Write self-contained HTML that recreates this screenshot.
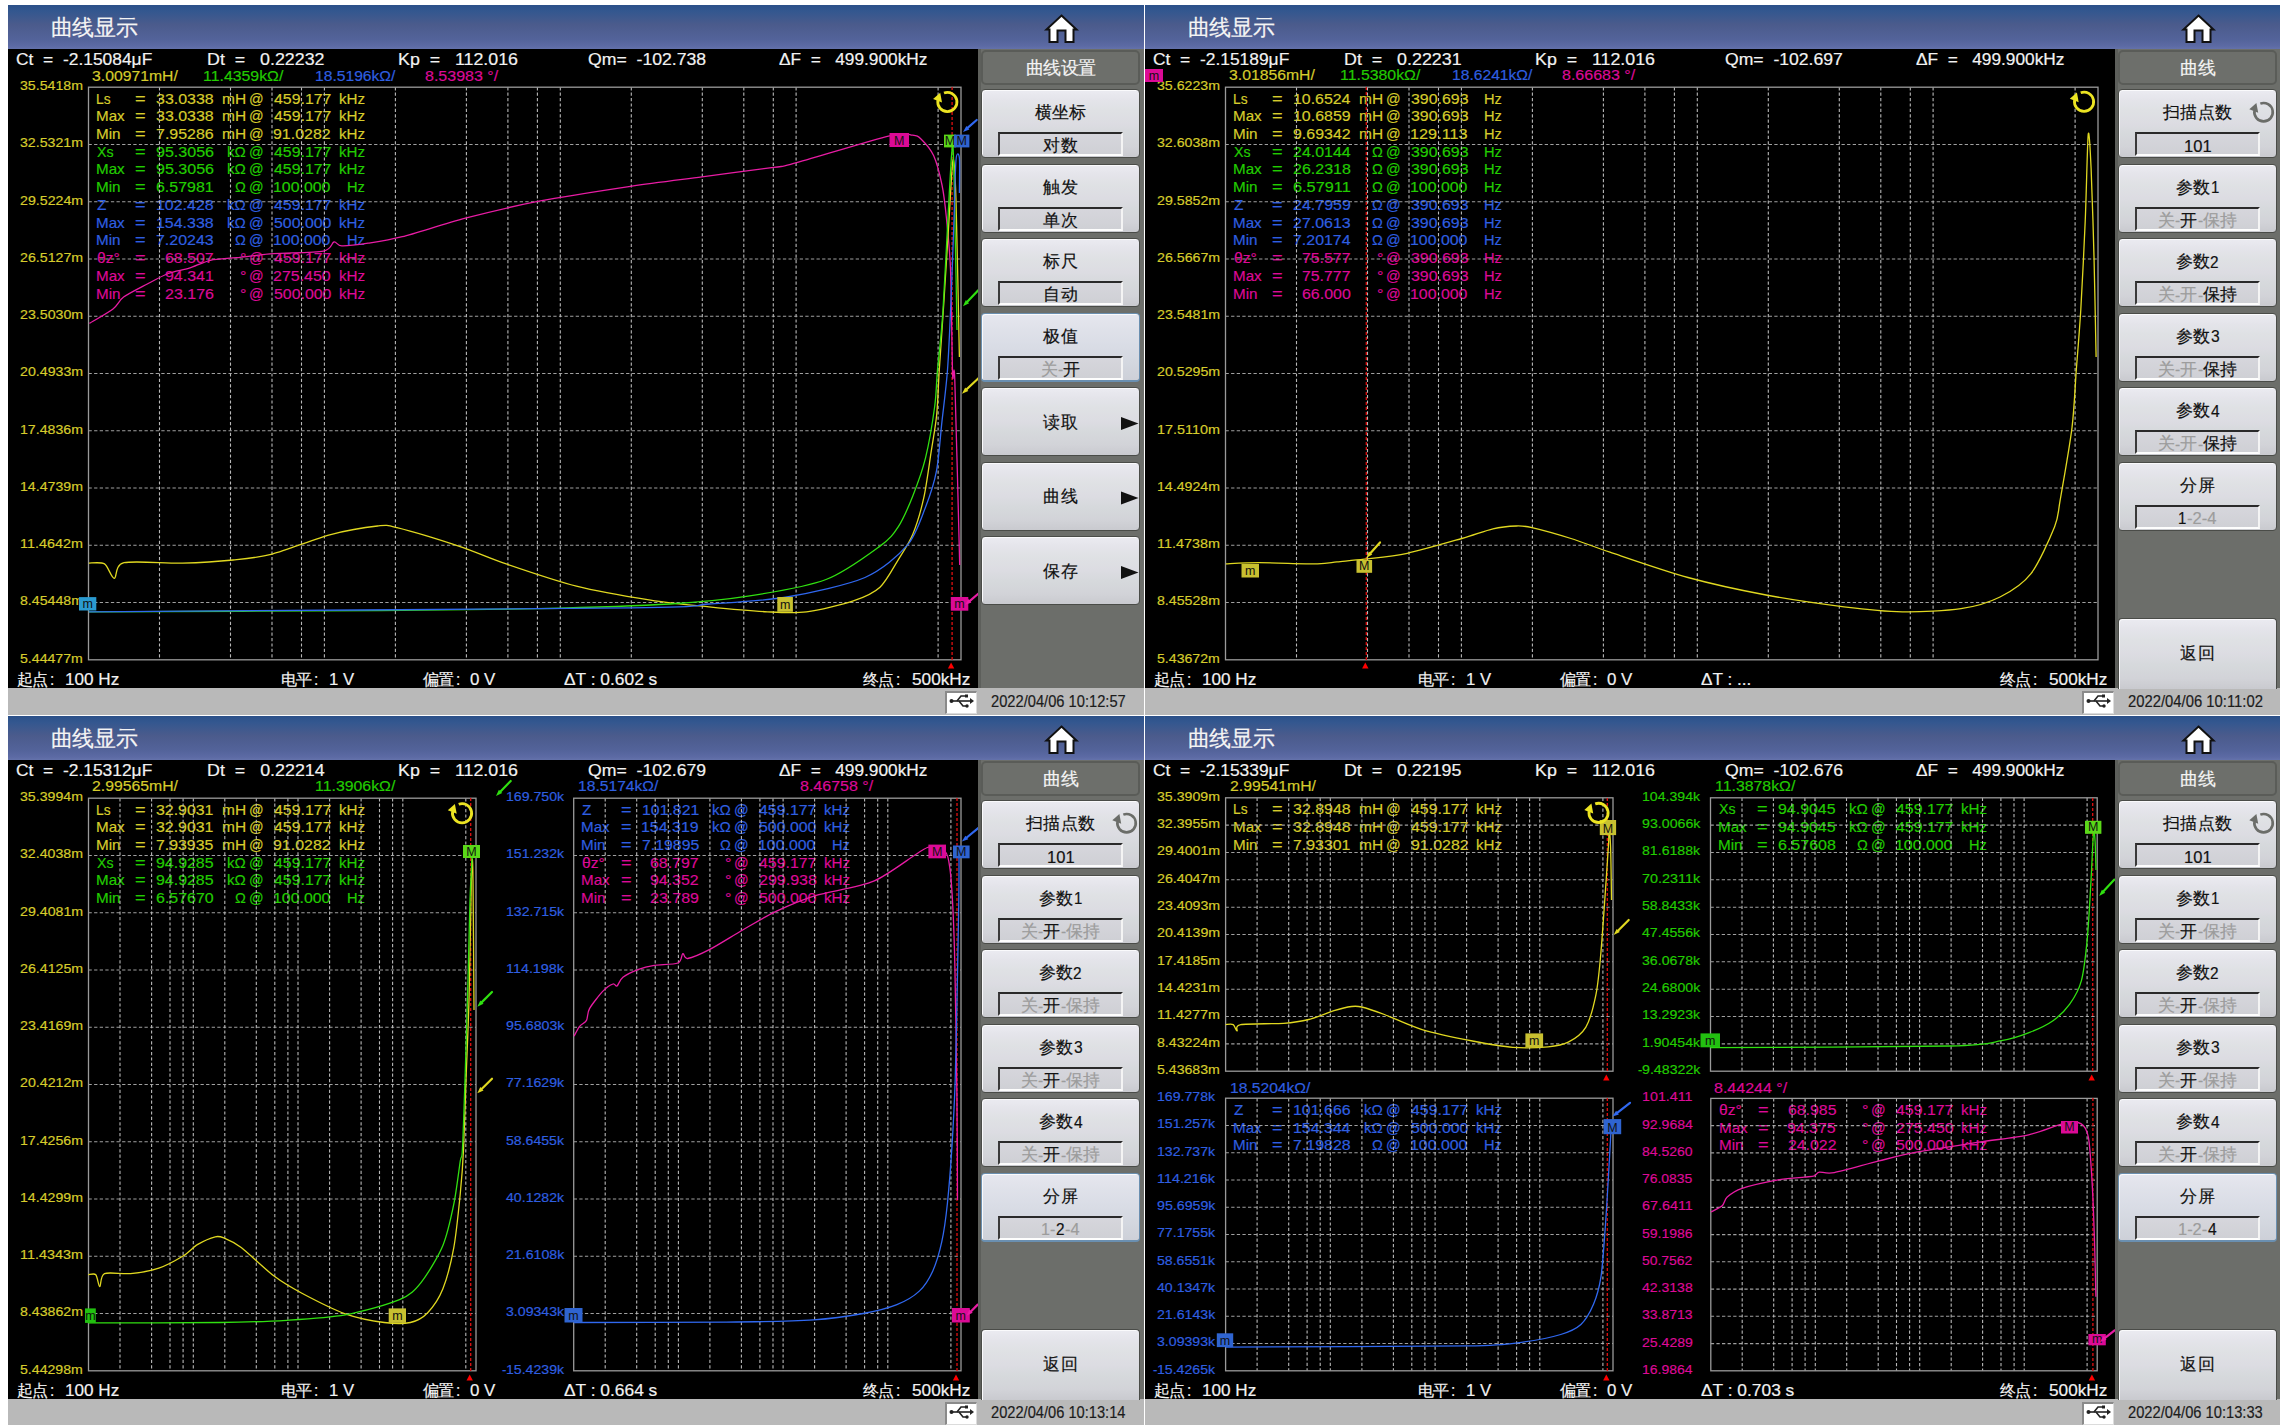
<!DOCTYPE html><html><head><meta charset="utf-8"><style>
*{margin:0;padding:0;box-sizing:border-box}
html,body{width:2282px;height:1425px;overflow:hidden;background:#fff;font-family:"Liberation Sans",sans-serif}
.p{position:absolute;overflow:hidden;background:#000}
.hd{position:absolute;left:0;top:0;width:100%;height:44px;background:linear-gradient(#2b5089 0%,#33578f 14%,#4b5b8c 45%,#53639a 78%,#5c6aa4 93%,#6472ab 100%)}
.sb{position:absolute;left:970px;top:44px;width:166px;height:639px;background:#6c6e6a;border-left:3px solid #5d5f5b}
.st{position:absolute;left:0;top:683px;width:100%;height:27px;background:#b9b9b9}
.t{position:absolute;white-space:pre;line-height:1;transform-origin:0 0;-webkit-text-stroke:0.18px currentColor}
.c{display:inline-block;text-align:center}
.btn{position:absolute;left:973px;width:159px;height:69px;border:1px solid #4a4c48;border-radius:4px;
 background:linear-gradient(#ebebf1 0%,#e4e4ea 15%,#dfe1e4 30%,#dcdce2 50%,#d6d9dc 65%,#d2d3d8 85%,#c9cacf 100%);
 box-shadow:inset 1px 1px 0 #fafafc}
.btn.sel{border-color:#6a8fb0;border-width:1px 1px 2px 1px;background:linear-gradient(#e6e7ef 0%,#e0e2ea 20%,#dadde6 45%,#d4d8e0 70%,#cdd0d8 100%)}
.tb{position:absolute;left:973px;top:45px;width:159px;height:35px;border:2px solid #5a5c58;border-radius:5px;background:#6d6f6b}
.vb{position:absolute;left:16px;top:42px;width:125px;height:24px;background:linear-gradient(#d6d6dc,#cfd0d5);
 border-top:2px solid #2a2a2a;border-left:2px solid #3a3a3a;border-bottom:2px solid #fdfdfd;border-right:2px solid #f4f4f4}
svg{position:absolute;left:0;top:0;overflow:visible}
</style></head><body>
<div class="p" style="left:8px;top:5px;width:1136px;height:710px">
<div class="hd"></div>
<div class="t" style="left:42.5px;top:11.9px;font-size:22.0px;color:#f4f4f4"><span class="c" style="width:21.80px">曲</span><span class="c" style="width:21.80px">线</span><span class="c" style="width:21.80px">显</span><span class="c" style="width:21.80px">示</span></div>
<svg width="1136" height="50"><path d="M1053.5 10.5 L1068.5 24.5 L1065.5 24.5 L1065.5 37 L1057.5 37 L1057.5 25.5 L1049.5 25.5 L1049.5 37 L1041.5 37 L1041.5 24.5 L1038.5 24.5 Z" fill="#fff" stroke="#111" stroke-width="2" stroke-linejoin="miter"/></svg>
<div class="t" style="left:8.1px;top:45.8px;font-size:16.19px;color:#f2f2f2;transform:scaleX(1.075)">Ct  =  -2.15084μF</div>
<div class="t" style="left:199.0px;top:45.8px;font-size:16.19px;color:#f2f2f2;transform:scaleX(1.102)">Dt  =   0.22232</div>
<div class="t" style="left:389.5px;top:45.8px;font-size:16.19px;color:#f2f2f2;transform:scaleX(1.100)">Kp  =   112.016</div>
<div class="t" style="left:580.1px;top:45.8px;font-size:16.19px;color:#f2f2f2;transform:scaleX(1.090)">Qm=  -102.738</div>
<div class="t" style="left:771.2px;top:45.8px;font-size:16.19px;color:#f2f2f2;transform:scaleX(1.068)">ΔF  =   499.900kHz</div>
<div class="t" style="left:84.3px;top:63.6px;font-size:14.71px;color:#d6cc2c;transform:scaleX(1.071)">3.00971mH/</div>
<div class="t" style="left:195.3px;top:63.6px;font-size:14.71px;color:#22cc00;transform:scaleX(1.079)">11.4359kΩ/</div>
<div class="t" style="left:306.7px;top:63.6px;font-size:14.71px;color:#2f5fe0;transform:scaleX(1.064)">18.5196kΩ/</div>
<div class="t" style="left:417.4px;top:63.6px;font-size:14.71px;color:#dc0a96;transform:scaleX(1.089)">8.53983 °/</div>
<div class="t" style="left:12.4px;top:74.1px;font-size:13.12px;color:#d6cc2c;transform:scaleX(1.080)">35.5418m</div>
<div class="t" style="left:12.4px;top:131.4px;font-size:13.12px;color:#d6cc2c;transform:scaleX(1.080)">32.5321m</div>
<div class="t" style="left:12.3px;top:188.6px;font-size:13.12px;color:#d6cc2c;transform:scaleX(1.083)">29.5224m</div>
<div class="t" style="left:12.3px;top:245.9px;font-size:13.12px;color:#d6cc2c;transform:scaleX(1.083)">26.5127m</div>
<div class="t" style="left:12.3px;top:303.1px;font-size:13.12px;color:#d6cc2c;transform:scaleX(1.083)">23.5030m</div>
<div class="t" style="left:12.3px;top:360.4px;font-size:13.12px;color:#d6cc2c;transform:scaleX(1.083)">20.4933m</div>
<div class="t" style="left:12.0px;top:417.7px;font-size:13.12px;color:#d6cc2c;transform:scaleX(1.079)">17.4836m</div>
<div class="t" style="left:12.0px;top:474.9px;font-size:13.12px;color:#d6cc2c;transform:scaleX(1.079)">14.4739m</div>
<div class="t" style="left:12.0px;top:532.2px;font-size:13.12px;color:#d6cc2c;transform:scaleX(1.097)">11.4642m</div>
<div class="t" style="left:12.4px;top:589.4px;font-size:13.12px;color:#d6cc2c;transform:scaleX(1.080)">8.45448m</div>
<div class="t" style="left:12.4px;top:646.7px;font-size:13.12px;color:#d6cc2c;transform:scaleX(1.078)">5.44477m</div>
<div class="t" style="left:88.3px;top:86.5px;font-size:14.92px;color:#d6cc2c;transform:scaleX(0.925)">Ls</div>
<div class="t" style="left:127.3px;top:86.5px;font-size:14.92px;color:#d6cc2c;transform:scaleX(1.215)">=</div>
<div class="t" style="left:148.1px;top:86.5px;font-size:14.92px;color:#d6cc2c;transform:scaleX(1.071)">33.0338</div>
<div class="t" style="left:214.2px;top:86.5px;font-size:14.92px;color:#d6cc2c;transform:scaleX(1.040)">mH</div>
<div class="t" style="left:240.8px;top:86.5px;font-size:14.92px;color:#d6cc2c;transform:scaleX(0.967)">@</div>
<div class="t" style="left:265.9px;top:86.5px;font-size:14.92px;color:#d6cc2c;transform:scaleX(1.065)">459.177</div>
<div class="t" style="left:330.7px;top:86.5px;font-size:14.92px;color:#d6cc2c;transform:scaleX(1.016)">kHz</div>
<div class="t" style="left:88.2px;top:104.2px;font-size:14.92px;color:#d6cc2c;transform:scaleX(1.019)">Max</div>
<div class="t" style="left:127.3px;top:104.2px;font-size:14.92px;color:#d6cc2c;transform:scaleX(1.215)">=</div>
<div class="t" style="left:148.1px;top:104.2px;font-size:14.92px;color:#d6cc2c;transform:scaleX(1.071)">33.0338</div>
<div class="t" style="left:214.2px;top:104.2px;font-size:14.92px;color:#d6cc2c;transform:scaleX(1.040)">mH</div>
<div class="t" style="left:240.8px;top:104.2px;font-size:14.92px;color:#d6cc2c;transform:scaleX(0.967)">@</div>
<div class="t" style="left:265.9px;top:104.2px;font-size:14.92px;color:#d6cc2c;transform:scaleX(1.065)">459.177</div>
<div class="t" style="left:330.7px;top:104.2px;font-size:14.92px;color:#d6cc2c;transform:scaleX(1.016)">kHz</div>
<div class="t" style="left:88.2px;top:121.9px;font-size:14.92px;color:#d6cc2c;transform:scaleX(1.022)">Min</div>
<div class="t" style="left:127.3px;top:121.9px;font-size:14.92px;color:#d6cc2c;transform:scaleX(1.215)">=</div>
<div class="t" style="left:148.0px;top:121.9px;font-size:14.92px;color:#d6cc2c;transform:scaleX(1.071)">7.95286</div>
<div class="t" style="left:214.2px;top:121.9px;font-size:14.92px;color:#d6cc2c;transform:scaleX(1.040)">mH</div>
<div class="t" style="left:240.8px;top:121.9px;font-size:14.92px;color:#d6cc2c;transform:scaleX(0.967)">@</div>
<div class="t" style="left:265.4px;top:121.9px;font-size:14.92px;color:#d6cc2c;transform:scaleX(1.069)">91.0282</div>
<div class="t" style="left:330.7px;top:121.9px;font-size:14.92px;color:#d6cc2c;transform:scaleX(1.016)">kHz</div>
<div class="t" style="left:89.1px;top:139.7px;font-size:14.92px;color:#22cc00;transform:scaleX(0.954)">Xs</div>
<div class="t" style="left:127.3px;top:139.7px;font-size:14.92px;color:#22cc00;transform:scaleX(1.215)">=</div>
<div class="t" style="left:147.8px;top:139.7px;font-size:14.92px;color:#22cc00;transform:scaleX(1.077)">95.3056</div>
<div class="t" style="left:218.7px;top:139.7px;font-size:14.92px;color:#22cc00;transform:scaleX(1.012)">kΩ</div>
<div class="t" style="left:240.8px;top:139.7px;font-size:14.92px;color:#22cc00;transform:scaleX(0.967)">@</div>
<div class="t" style="left:265.9px;top:139.7px;font-size:14.92px;color:#22cc00;transform:scaleX(1.065)">459.177</div>
<div class="t" style="left:330.7px;top:139.7px;font-size:14.92px;color:#22cc00;transform:scaleX(1.016)">kHz</div>
<div class="t" style="left:88.2px;top:157.4px;font-size:14.92px;color:#22cc00;transform:scaleX(1.019)">Max</div>
<div class="t" style="left:127.3px;top:157.4px;font-size:14.92px;color:#22cc00;transform:scaleX(1.215)">=</div>
<div class="t" style="left:147.8px;top:157.4px;font-size:14.92px;color:#22cc00;transform:scaleX(1.077)">95.3056</div>
<div class="t" style="left:218.7px;top:157.4px;font-size:14.92px;color:#22cc00;transform:scaleX(1.012)">kΩ</div>
<div class="t" style="left:240.8px;top:157.4px;font-size:14.92px;color:#22cc00;transform:scaleX(0.967)">@</div>
<div class="t" style="left:265.9px;top:157.4px;font-size:14.92px;color:#22cc00;transform:scaleX(1.065)">459.177</div>
<div class="t" style="left:330.7px;top:157.4px;font-size:14.92px;color:#22cc00;transform:scaleX(1.016)">kHz</div>
<div class="t" style="left:88.2px;top:175.1px;font-size:14.92px;color:#22cc00;transform:scaleX(1.022)">Min</div>
<div class="t" style="left:127.3px;top:175.1px;font-size:14.92px;color:#22cc00;transform:scaleX(1.215)">=</div>
<div class="t" style="left:148.2px;top:175.1px;font-size:14.92px;color:#22cc00;transform:scaleX(1.069)">6.57981</div>
<div class="t" style="left:226.7px;top:175.1px;font-size:14.92px;color:#22cc00;transform:scaleX(0.973)">Ω</div>
<div class="t" style="left:240.8px;top:175.1px;font-size:14.92px;color:#22cc00;transform:scaleX(0.967)">@</div>
<div class="t" style="left:265.1px;top:175.1px;font-size:14.92px;color:#22cc00;transform:scaleX(1.066)">100.000</div>
<div class="t" style="left:338.9px;top:175.1px;font-size:14.92px;color:#22cc00;transform:scaleX(0.980)">Hz</div>
<div class="t" style="left:88.9px;top:192.9px;font-size:14.92px;color:#2f5fe0;transform:scaleX(1.031)">Z</div>
<div class="t" style="left:127.3px;top:192.9px;font-size:14.92px;color:#2f5fe0;transform:scaleX(1.215)">=</div>
<div class="t" style="left:148.1px;top:192.9px;font-size:14.92px;color:#2f5fe0;transform:scaleX(1.069)">102.428</div>
<div class="t" style="left:218.7px;top:192.9px;font-size:14.92px;color:#2f5fe0;transform:scaleX(1.012)">kΩ</div>
<div class="t" style="left:240.8px;top:192.9px;font-size:14.92px;color:#2f5fe0;transform:scaleX(0.967)">@</div>
<div class="t" style="left:265.9px;top:192.9px;font-size:14.92px;color:#2f5fe0;transform:scaleX(1.065)">459.177</div>
<div class="t" style="left:330.7px;top:192.9px;font-size:14.92px;color:#2f5fe0;transform:scaleX(1.016)">kHz</div>
<div class="t" style="left:88.2px;top:210.6px;font-size:14.92px;color:#2f5fe0;transform:scaleX(1.019)">Max</div>
<div class="t" style="left:127.3px;top:210.6px;font-size:14.92px;color:#2f5fe0;transform:scaleX(1.215)">=</div>
<div class="t" style="left:148.1px;top:210.6px;font-size:14.92px;color:#2f5fe0;transform:scaleX(1.069)">154.338</div>
<div class="t" style="left:218.7px;top:210.6px;font-size:14.92px;color:#2f5fe0;transform:scaleX(1.012)">kΩ</div>
<div class="t" style="left:240.8px;top:210.6px;font-size:14.92px;color:#2f5fe0;transform:scaleX(0.967)">@</div>
<div class="t" style="left:265.6px;top:210.6px;font-size:14.92px;color:#2f5fe0;transform:scaleX(1.065)">500.000</div>
<div class="t" style="left:330.7px;top:210.6px;font-size:14.92px;color:#2f5fe0;transform:scaleX(1.016)">kHz</div>
<div class="t" style="left:88.2px;top:228.3px;font-size:14.92px;color:#2f5fe0;transform:scaleX(1.022)">Min</div>
<div class="t" style="left:127.3px;top:228.3px;font-size:14.92px;color:#2f5fe0;transform:scaleX(1.215)">=</div>
<div class="t" style="left:148.2px;top:228.3px;font-size:14.92px;color:#2f5fe0;transform:scaleX(1.069)">7.20243</div>
<div class="t" style="left:226.7px;top:228.3px;font-size:14.92px;color:#2f5fe0;transform:scaleX(0.973)">Ω</div>
<div class="t" style="left:240.8px;top:228.3px;font-size:14.92px;color:#2f5fe0;transform:scaleX(0.967)">@</div>
<div class="t" style="left:265.1px;top:228.3px;font-size:14.92px;color:#2f5fe0;transform:scaleX(1.066)">100.000</div>
<div class="t" style="left:338.9px;top:228.3px;font-size:14.92px;color:#2f5fe0;transform:scaleX(0.980)">Hz</div>
<div class="t" style="left:88.6px;top:246.0px;font-size:14.92px;color:#dc0a96;transform:scaleX(1.050)">θz°</div>
<div class="t" style="left:127.3px;top:246.0px;font-size:14.92px;color:#dc0a96;transform:scaleX(1.215)">=</div>
<div class="t" style="left:157.2px;top:246.0px;font-size:14.92px;color:#dc0a96;transform:scaleX(1.067)">68.507</div>
<div class="t" style="left:231.5px;top:246.0px;font-size:14.92px;color:#dc0a96;transform:scaleX(1.080)">°</div>
<div class="t" style="left:240.8px;top:246.0px;font-size:14.92px;color:#dc0a96;transform:scaleX(0.967)">@</div>
<div class="t" style="left:265.9px;top:246.0px;font-size:14.92px;color:#dc0a96;transform:scaleX(1.065)">459.177</div>
<div class="t" style="left:330.7px;top:246.0px;font-size:14.92px;color:#dc0a96;transform:scaleX(1.016)">kHz</div>
<div class="t" style="left:88.2px;top:263.8px;font-size:14.92px;color:#dc0a96;transform:scaleX(1.019)">Max</div>
<div class="t" style="left:127.3px;top:263.8px;font-size:14.92px;color:#dc0a96;transform:scaleX(1.215)">=</div>
<div class="t" style="left:157.1px;top:263.8px;font-size:14.92px;color:#dc0a96;transform:scaleX(1.070)">94.341</div>
<div class="t" style="left:231.5px;top:263.8px;font-size:14.92px;color:#dc0a96;transform:scaleX(1.080)">°</div>
<div class="t" style="left:240.8px;top:263.8px;font-size:14.92px;color:#dc0a96;transform:scaleX(0.967)">@</div>
<div class="t" style="left:265.4px;top:263.8px;font-size:14.92px;color:#dc0a96;transform:scaleX(1.071)">275.450</div>
<div class="t" style="left:330.7px;top:263.8px;font-size:14.92px;color:#dc0a96;transform:scaleX(1.016)">kHz</div>
<div class="t" style="left:88.2px;top:281.5px;font-size:14.92px;color:#dc0a96;transform:scaleX(1.022)">Min</div>
<div class="t" style="left:127.3px;top:281.5px;font-size:14.92px;color:#dc0a96;transform:scaleX(1.215)">=</div>
<div class="t" style="left:156.9px;top:281.5px;font-size:14.92px;color:#dc0a96;transform:scaleX(1.073)">23.176</div>
<div class="t" style="left:231.5px;top:281.5px;font-size:14.92px;color:#dc0a96;transform:scaleX(1.080)">°</div>
<div class="t" style="left:240.8px;top:281.5px;font-size:14.92px;color:#dc0a96;transform:scaleX(0.967)">@</div>
<div class="t" style="left:265.6px;top:281.5px;font-size:14.92px;color:#dc0a96;transform:scaleX(1.065)">500.000</div>
<div class="t" style="left:330.7px;top:281.5px;font-size:14.92px;color:#dc0a96;transform:scaleX(1.016)">kHz</div>
<div class="t" style="left:8.5px;top:667.0px;font-size:16.0px;color:#f2f2f2"><span class="c" style="width:15.80px">起</span><span class="c" style="width:15.80px">点</span></div>
<div class="t" style="left:42.1px;top:665.9px;font-size:16.40px;color:#f2f2f2;transform:scaleX(0.945)">:</div>
<div class="t" style="left:57.0px;top:665.8px;font-size:16.50px;color:#f2f2f2;transform:scaleX(1.038)">100 Hz</div>
<div class="t" style="left:272.5px;top:667.0px;font-size:16.0px;color:#f2f2f2"><span class="c" style="width:15.80px">电</span><span class="c" style="width:15.80px">平</span></div>
<div class="t" style="left:306.1px;top:665.9px;font-size:16.40px;color:#f2f2f2;transform:scaleX(0.945)">:</div>
<div class="t" style="left:320.7px;top:665.8px;font-size:16.50px;color:#f2f2f2;transform:scaleX(1.012)">1 V</div>
<div class="t" style="left:414.5px;top:667.0px;font-size:16.0px;color:#f2f2f2"><span class="c" style="width:15.80px">偏</span><span class="c" style="width:15.80px">置</span></div>
<div class="t" style="left:448.1px;top:665.9px;font-size:16.40px;color:#f2f2f2;transform:scaleX(0.945)">:</div>
<div class="t" style="left:462.2px;top:665.8px;font-size:16.50px;color:#f2f2f2;transform:scaleX(1.023)">0 V</div>
<div class="t" style="left:556.0px;top:665.8px;font-size:16.50px;color:#f2f2f2;transform:scaleX(1.052)">ΔT : 0.602 s</div>
<div class="t" style="left:854.7px;top:667.0px;font-size:16.0px;color:#f2f2f2"><span class="c" style="width:15.80px">终</span><span class="c" style="width:15.80px">点</span></div>
<div class="t" style="left:888.3px;top:665.9px;font-size:16.40px;color:#f2f2f2;transform:scaleX(0.945)">:</div>
<div class="t" style="left:903.7px;top:665.8px;font-size:16.50px;color:#f2f2f2;transform:scaleX(1.043)">500kHz</div>
<svg width="970" height="683"><path d="M80.5 139.5H953.0M80.5 196.7H953.0M80.5 254.0H953.0M80.5 311.2H953.0M80.5 368.5H953.0M80.5 425.8H953.0M80.5 483.0H953.0M80.5 540.3H953.0M80.5 597.5H953.0" stroke="#a0a0a0" stroke-width="1.1" stroke-dasharray="3.3 2.3" fill="none"/><path d="M151.5 82.2V654.8M222.5 82.2V654.8M264.0 82.2V654.8M293.5 82.2V654.8M316.4 82.2V654.8M387.4 82.2V654.8M458.4 82.2V654.8M499.9 82.2V654.8M529.4 82.2V654.8M552.3 82.2V654.8M623.3 82.2V654.8M694.3 82.2V654.8M735.8 82.2V654.8M765.3 82.2V654.8M788.1 82.2V654.8M930.1 82.2V654.8" stroke="#b8b8b8" stroke-width="1.1" stroke-dasharray="3.2 2.2" fill="none"/><rect x="80.5" y="82.2" width="872.5" height="572.6" stroke="#9a9a9a" stroke-width="1.3" fill="none"/><path d="M944.1 82.0V655.0" stroke="#e01010" stroke-width="1.3" stroke-dasharray="3 2" fill="none"/><path d="M943.1 657.5L946.3 663.5L939.9 663.5Z" fill="#f00"/><path d="M81.4 318.4C84.8 316.3 100.1 307.8 105.0 304.0C109.9 300.2 110.7 295.7 115.6 292.1C120.5 288.5 132.9 282.4 139.3 279.0C145.7 275.6 154.3 270.8 160.3 268.5C166.3 266.2 175.3 265.1 181.3 263.2C187.3 261.3 195.6 256.8 202.4 255.3C209.2 253.8 219.7 253.6 228.7 252.7C237.7 251.8 253.1 249.6 265.5 248.7C277.9 247.8 306.8 247.8 315.4 246.1C324.0 244.4 323.4 237.7 326.0 237.0C328.6 236.3 328.9 240.7 333.8 240.9C338.7 241.1 351.5 239.5 360.1 238.2C368.7 236.9 380.4 235.3 394.3 231.7C408.2 228.1 437.9 218.3 457.4 213.2C476.9 208.1 507.4 200.8 531.0 196.2C554.6 191.6 599.2 184.8 622.5 181.3C645.8 177.8 673.5 174.5 694.0 171.8C714.5 169.1 752.5 164.3 765.7 162.4C778.9 160.5 770.2 162.7 786.7 158.2C803.2 153.7 864.7 134.8 881.5 130.8C898.3 126.8 900.1 129.7 904.6 130.2C909.1 130.7 910.0 131.1 913.0 134.0C916.0 136.9 922.7 144.2 925.7 150.8C928.7 157.4 932.2 171.3 934.0 180.0C935.8 188.7 937.1 199.7 938.3 211.8C939.5 223.9 941.6 241.9 942.5 264.5C943.4 287.1 944.0 353.9 944.6 369.7C945.2 385.5 945.8 347.8 946.8 375.0C947.8 402.2 951.0 533.6 951.7 560.0" stroke="#e81ca4" stroke-width="1.3" fill="none" stroke-linejoin="round"/><path d="M80.9 558.1C83.1 558.2 92.9 556.7 96.5 558.9C100.1 561.1 103.5 573.5 106.3 573.3C109.1 573.1 106.3 559.9 116.0 557.7C125.7 555.5 158.9 558.5 174.5 558.1C190.1 557.7 212.4 556.3 225.2 555.0C238.0 553.7 250.3 552.7 264.2 549.1C278.1 545.5 307.7 533.6 322.7 529.6C337.7 525.6 360.0 522.0 369.5 521.0C379.0 520.0 377.3 519.7 389.0 522.6C400.7 525.5 435.8 536.1 451.4 541.3C467.0 546.5 481.5 553.2 498.2 558.9C514.9 564.6 547.8 575.9 568.4 581.1C589.0 586.3 623.6 592.1 642.5 595.1C661.4 598.1 684.3 600.1 701.0 601.8C717.7 603.5 745.6 606.1 759.5 606.8C773.4 607.5 786.2 608.4 798.5 606.8C810.8 605.2 834.8 599.4 845.3 595.9C855.8 592.4 865.6 588.1 872.0 582.2C878.4 576.3 885.5 562.4 890.2 554.8C894.9 547.2 901.1 538.1 904.8 529.2C908.5 520.3 913.2 504.4 915.8 492.7C918.4 481.0 921.3 458.8 923.1 447.1C924.9 435.4 927.4 422.3 928.6 410.6C929.8 398.9 930.2 381.5 931.3 365.0C932.4 348.5 934.6 316.4 936.0 295.0C937.4 273.6 939.7 235.0 941.0 215.0C942.3 195.0 944.0 157.9 945.0 155.0C946.0 152.1 947.1 166.9 948.0 195.0C948.9 223.1 950.9 329.6 951.4 352.0" stroke="#e0d820" stroke-width="1.3" fill="none" stroke-linejoin="round"/><path d="M80.9 606.8C122.7 606.6 309.3 606.1 373.4 605.7C437.5 605.3 488.2 604.7 529.4 603.7C570.6 602.7 631.9 600.8 662.0 599.0C692.1 597.2 717.7 594.7 740.0 591.2C762.3 587.7 799.1 581.7 818.0 574.5C836.9 567.3 861.7 548.6 872.0 541.1C882.3 533.6 885.5 529.1 890.2 521.9C894.9 514.7 900.9 500.8 904.8 490.9C908.7 481.0 914.5 465.4 917.6 452.6C920.7 439.8 925.0 414.0 926.7 401.5C928.4 389.0 928.3 378.5 929.5 365.0C930.7 351.5 933.2 332.1 934.9 306.8C936.6 281.5 939.9 211.5 941.3 188.0C942.7 164.5 944.1 134.3 945.0 142.4C945.9 150.5 946.9 218.9 947.5 245.0C948.1 271.1 948.8 313.6 949.0 325.0" stroke="#30e010" stroke-width="1.3" fill="none" stroke-linejoin="round"/><path d="M80.9 606.8C158.3 606.2 534.4 604.0 623.0 602.9C711.6 601.8 678.7 600.6 701.0 599.0C723.3 597.4 756.7 595.8 779.0 592.0C801.3 588.2 839.8 579.9 857.0 572.5C874.2 565.1 890.7 550.3 899.4 540.2C908.1 530.1 913.4 512.6 917.6 501.9C921.8 491.2 926.3 477.7 928.6 465.4C930.9 453.1 932.4 430.4 934.0 416.1C935.6 401.8 938.2 382.3 939.5 365.0C940.8 347.7 942.1 316.4 943.0 295.0C943.9 273.6 945.3 235.0 946.0 215.0C946.7 195.0 947.2 163.9 948.0 155.0C948.8 146.1 950.9 148.3 951.4 153.0C951.9 157.7 951.4 183.0 951.4 188.0" stroke="#3068f0" stroke-width="1.3" fill="none" stroke-linejoin="round"/><rect x="881.5" y="128.0" width="19.5" height="14.0" fill="#dc0a96"/><text x="891.2" y="139.5" font-size="12.5" text-anchor="middle" fill="#111" font-family="Liberation Sans">M</text><rect x="936.0" y="129.6" width="12.0" height="12.8" fill="#5ad818"/><text x="942.0" y="139.9" font-size="12.5" text-anchor="middle" fill="#111" font-family="Liberation Sans">M</text><rect x="946.0" y="129.6" width="15.4" height="12.8" fill="#2f64d0"/><text x="953.7" y="139.9" font-size="12.5" text-anchor="middle" fill="#111" font-family="Liberation Sans">M</text><rect x="71.0" y="592.1" width="17.3" height="13.4" fill="#2a9ad0"/><text x="79.7" y="603.0" font-size="12.5" text-anchor="middle" fill="#111" font-family="Liberation Sans">m</text><rect x="769.3" y="592.0" width="15.6" height="14.8" fill="#c8c030"/><text x="777.1" y="604.3" font-size="12.5" text-anchor="middle" fill="#111" font-family="Liberation Sans">m</text><rect x="942.8" y="592.0" width="17.5" height="13.7" fill="#dc0a96"/><text x="951.5" y="603.2" font-size="12.5" text-anchor="middle" fill="#111" font-family="Liberation Sans">m</text><path d="M968.7 115.0L959.9 122.6" stroke="#3068f0" stroke-width="2.2" stroke-linecap="round"/><path d="M955.0 126.9L958.4 120.9L961.4 124.4Z" fill="#3068f0"/><path d="M970.5 284.9L959.5 296.6" stroke="#30e010" stroke-width="2.2" stroke-linecap="round"/><path d="M955.0 301.3L957.8 295.0L961.1 298.2Z" fill="#30e010"/><path d="M971.5 372.3L958.7 384.3" stroke="#e0d820" stroke-width="2.2" stroke-linecap="round"/><path d="M954.0 388.7L957.2 382.6L960.3 385.9Z" fill="#e0d820"/><path d="M970.5 588.5L961.9 595.8" stroke="#e81ca4" stroke-width="2.2" stroke-linecap="round"/><path d="M957.0 600.0L960.5 594.0L963.4 597.5Z" fill="#e81ca4"/><path d="M936.0 88.0A9.6 9.6 0 1 1 929.9 95.3" stroke="#ece422" stroke-width="2.8" fill="none"/><path d="M925.1 94.0L932.2 87.7L934.0 97.6Z" fill="#ece422"/></svg>
<div class="st"></div>
<div style="position:absolute;left:937px;top:686px;width:32px;height:23px;background:#fff;border-top:2px solid #8a8a8a;border-left:2px solid #8a8a8a;border-bottom:1px solid #dcdcdc;border-right:1px solid #dcdcdc"></div>
<svg width="1136" height="710"><g transform="translate(0,-2.5)" stroke="#222" fill="#222" stroke-width="1.6"><path d="M943 698.5H962" fill="none"/><path d="M962 695.5L966 698.5L962 701.5Z" stroke="none"/><path d="M949 698.5L953 693.5H957" fill="none"/><path d="M951 698.5L955 703.5H958" fill="none"/><circle cx="943.5" cy="698.5" r="2" stroke="none"/><rect x="957" y="692" width="3" height="3" stroke="none"/><circle cx="959" cy="703.5" r="1.7" stroke="none"/></g></svg>
<div class="t" style="left:983.3px;top:688.9px;font-size:15.87px;color:#1c1c1c;transform:scaleX(0.926)">2022/04/06 10:12:57</div>
<div class="sb"></div>
<div class="tb"></div>
<div class="t" style="left:1017.5px;top:54.8px;font-size:17.5px;color:#f4f4f4"><span class="c" style="width:17.50px">曲</span><span class="c" style="width:17.50px">线</span><span class="c" style="width:17.50px">设</span><span class="c" style="width:17.50px">置</span></div>
<div class="btn" style="top:84.0px">
<div class="vb"></div>
</div>
<div class="t" style="left:1026.5px;top:99.1px;font-size:17.3px;color:#111"><span class="c" style="width:17.30px">横</span><span class="c" style="width:17.30px">坐</span><span class="c" style="width:17.30px">标</span></div>
<div class="t" style="left:1035.2px;top:132.1px;font-size:17.3px;color:#111"><span class="c" style="width:17.30px">对</span><span class="c" style="width:17.30px">数</span></div>
<div class="btn" style="top:158.5px">
<div class="vb"></div>
</div>
<div class="t" style="left:1035.2px;top:173.6px;font-size:17.3px;color:#111"><span class="c" style="width:17.30px">触</span><span class="c" style="width:17.30px">发</span></div>
<div class="t" style="left:1035.2px;top:206.6px;font-size:17.3px;color:#111"><span class="c" style="width:17.30px">单</span><span class="c" style="width:17.30px">次</span></div>
<div class="btn" style="top:233.0px">
<div class="vb"></div>
</div>
<div class="t" style="left:1035.2px;top:248.1px;font-size:17.3px;color:#111"><span class="c" style="width:17.30px">标</span><span class="c" style="width:17.30px">尺</span></div>
<div class="t" style="left:1035.2px;top:281.1px;font-size:17.3px;color:#111"><span class="c" style="width:17.30px">自</span><span class="c" style="width:17.30px">动</span></div>
<div class="btn sel" style="top:307.5px">
<div class="vb"></div>
</div>
<div class="t" style="left:1035.2px;top:322.6px;font-size:17.3px;color:#111"><span class="c" style="width:17.30px">极</span><span class="c" style="width:17.30px">值</span></div>
<div class="t" style="left:1032.5px;top:355.6px;font-size:17.3px;color:#9c9c9c"><span class="c" style="width:17.30px">关</span></div>
<div class="t" style="left:1049.9px;top:357.1px;font-size:15.87px;color:#9c9c9c;transform:scaleX(0.983)">-</div>
<div class="t" style="left:1055.2px;top:355.6px;font-size:17.3px;color:#111"><span class="c" style="width:17.30px">开</span></div>
<div class="btn" style="top:382.0px">
</div>
<div class="t" style="left:1035.2px;top:408.6px;font-size:17.3px;color:#111"><span class="c" style="width:17.30px">读</span><span class="c" style="width:17.30px">取</span></div>
<svg width="1136" height="710"><path d="M1113 412.0L1130.5 418.5L1113 425.0Z" fill="#111"/></svg>
<div class="btn" style="top:456.5px">
</div>
<div class="t" style="left:1035.2px;top:483.1px;font-size:17.3px;color:#111"><span class="c" style="width:17.30px">曲</span><span class="c" style="width:17.30px">线</span></div>
<svg width="1136" height="710"><path d="M1113 486.5L1130.5 493.0L1113 499.5Z" fill="#111"/></svg>
<div class="btn" style="top:531.0px">
</div>
<div class="t" style="left:1035.2px;top:557.6px;font-size:17.3px;color:#111"><span class="c" style="width:17.30px">保</span><span class="c" style="width:17.30px">存</span></div>
<svg width="1136" height="710"><path d="M1113 561.0L1130.5 567.5L1113 574.0Z" fill="#111"/></svg>
</div>
<div class="p" style="left:1145px;top:5px;width:1135px;height:710px">
<div class="hd"></div>
<div class="t" style="left:42.5px;top:11.9px;font-size:22.0px;color:#f4f4f4"><span class="c" style="width:21.80px">曲</span><span class="c" style="width:21.80px">线</span><span class="c" style="width:21.80px">显</span><span class="c" style="width:21.80px">示</span></div>
<svg width="1136" height="50"><path d="M1053.5 10.5 L1068.5 24.5 L1065.5 24.5 L1065.5 37 L1057.5 37 L1057.5 25.5 L1049.5 25.5 L1049.5 37 L1041.5 37 L1041.5 24.5 L1038.5 24.5 Z" fill="#fff" stroke="#111" stroke-width="2" stroke-linejoin="miter"/></svg>
<div class="t" style="left:8.1px;top:45.8px;font-size:16.19px;color:#f2f2f2;transform:scaleX(1.075)">Ct  =  -2.15189μF</div>
<div class="t" style="left:199.0px;top:45.8px;font-size:16.19px;color:#f2f2f2;transform:scaleX(1.103)">Dt  =   0.22231</div>
<div class="t" style="left:389.5px;top:45.8px;font-size:16.19px;color:#f2f2f2;transform:scaleX(1.100)">Kp  =   112.016</div>
<div class="t" style="left:580.1px;top:45.8px;font-size:16.19px;color:#f2f2f2;transform:scaleX(1.087)">Qm=  -102.697</div>
<div class="t" style="left:771.2px;top:45.8px;font-size:16.19px;color:#f2f2f2;transform:scaleX(1.068)">ΔF  =   499.900kHz</div>
<div class="t" style="left:84.3px;top:62.8px;font-size:14.71px;color:#d6cc2c;transform:scaleX(1.071)">3.01856mH/</div>
<div class="t" style="left:195.3px;top:62.8px;font-size:14.71px;color:#22cc00;transform:scaleX(1.079)">11.5380kΩ/</div>
<div class="t" style="left:306.7px;top:62.8px;font-size:14.71px;color:#2f5fe0;transform:scaleX(1.064)">18.6241kΩ/</div>
<div class="t" style="left:417.4px;top:62.8px;font-size:14.71px;color:#dc0a96;transform:scaleX(1.089)">8.66683 °/</div>
<div class="t" style="left:12.4px;top:74.1px;font-size:13.12px;color:#d6cc2c;transform:scaleX(1.080)">35.6223m</div>
<div class="t" style="left:12.4px;top:131.4px;font-size:13.12px;color:#d6cc2c;transform:scaleX(1.080)">32.6038m</div>
<div class="t" style="left:12.3px;top:188.6px;font-size:13.12px;color:#d6cc2c;transform:scaleX(1.083)">29.5852m</div>
<div class="t" style="left:12.3px;top:245.9px;font-size:13.12px;color:#d6cc2c;transform:scaleX(1.083)">26.5667m</div>
<div class="t" style="left:12.3px;top:303.1px;font-size:13.12px;color:#d6cc2c;transform:scaleX(1.083)">23.5481m</div>
<div class="t" style="left:12.3px;top:360.4px;font-size:13.12px;color:#d6cc2c;transform:scaleX(1.083)">20.5295m</div>
<div class="t" style="left:12.0px;top:417.7px;font-size:13.12px;color:#d6cc2c;transform:scaleX(1.097)">17.5110m</div>
<div class="t" style="left:12.0px;top:474.9px;font-size:13.12px;color:#d6cc2c;transform:scaleX(1.079)">14.4924m</div>
<div class="t" style="left:12.0px;top:532.2px;font-size:13.12px;color:#d6cc2c;transform:scaleX(1.097)">11.4738m</div>
<div class="t" style="left:12.4px;top:589.4px;font-size:13.12px;color:#d6cc2c;transform:scaleX(1.080)">8.45528m</div>
<div class="t" style="left:12.4px;top:646.7px;font-size:13.12px;color:#d6cc2c;transform:scaleX(1.078)">5.43672m</div>
<div class="t" style="left:88.3px;top:86.5px;font-size:14.92px;color:#d6cc2c;transform:scaleX(0.925)">Ls</div>
<div class="t" style="left:127.3px;top:86.5px;font-size:14.92px;color:#d6cc2c;transform:scaleX(1.215)">=</div>
<div class="t" style="left:148.0px;top:86.5px;font-size:14.92px;color:#d6cc2c;transform:scaleX(1.066)">10.6524</div>
<div class="t" style="left:214.2px;top:86.5px;font-size:14.92px;color:#d6cc2c;transform:scaleX(1.040)">mH</div>
<div class="t" style="left:240.8px;top:86.5px;font-size:14.92px;color:#d6cc2c;transform:scaleX(0.967)">@</div>
<div class="t" style="left:265.6px;top:86.5px;font-size:14.92px;color:#d6cc2c;transform:scaleX(1.068)">390.693</div>
<div class="t" style="left:338.9px;top:86.5px;font-size:14.92px;color:#d6cc2c;transform:scaleX(0.980)">Hz</div>
<div class="t" style="left:88.2px;top:104.2px;font-size:14.92px;color:#d6cc2c;transform:scaleX(1.019)">Max</div>
<div class="t" style="left:127.3px;top:104.2px;font-size:14.92px;color:#d6cc2c;transform:scaleX(1.215)">=</div>
<div class="t" style="left:148.1px;top:104.2px;font-size:14.92px;color:#d6cc2c;transform:scaleX(1.069)">10.6859</div>
<div class="t" style="left:214.2px;top:104.2px;font-size:14.92px;color:#d6cc2c;transform:scaleX(1.040)">mH</div>
<div class="t" style="left:240.8px;top:104.2px;font-size:14.92px;color:#d6cc2c;transform:scaleX(0.967)">@</div>
<div class="t" style="left:265.6px;top:104.2px;font-size:14.92px;color:#d6cc2c;transform:scaleX(1.068)">390.693</div>
<div class="t" style="left:338.9px;top:104.2px;font-size:14.92px;color:#d6cc2c;transform:scaleX(0.980)">Hz</div>
<div class="t" style="left:88.2px;top:121.9px;font-size:14.92px;color:#d6cc2c;transform:scaleX(1.022)">Min</div>
<div class="t" style="left:127.3px;top:121.9px;font-size:14.92px;color:#d6cc2c;transform:scaleX(1.215)">=</div>
<div class="t" style="left:148.2px;top:121.9px;font-size:14.92px;color:#d6cc2c;transform:scaleX(1.069)">9.69342</div>
<div class="t" style="left:214.2px;top:121.9px;font-size:14.92px;color:#d6cc2c;transform:scaleX(1.040)">mH</div>
<div class="t" style="left:240.8px;top:121.9px;font-size:14.92px;color:#d6cc2c;transform:scaleX(0.967)">@</div>
<div class="t" style="left:265.1px;top:121.9px;font-size:14.92px;color:#d6cc2c;transform:scaleX(1.092)">129.113</div>
<div class="t" style="left:338.9px;top:121.9px;font-size:14.92px;color:#d6cc2c;transform:scaleX(0.980)">Hz</div>
<div class="t" style="left:89.1px;top:139.7px;font-size:14.92px;color:#22cc00;transform:scaleX(0.954)">Xs</div>
<div class="t" style="left:127.3px;top:139.7px;font-size:14.92px;color:#22cc00;transform:scaleX(1.215)">=</div>
<div class="t" style="left:147.8px;top:139.7px;font-size:14.92px;color:#22cc00;transform:scaleX(1.071)">24.0144</div>
<div class="t" style="left:226.7px;top:139.7px;font-size:14.92px;color:#22cc00;transform:scaleX(0.973)">Ω</div>
<div class="t" style="left:240.8px;top:139.7px;font-size:14.92px;color:#22cc00;transform:scaleX(0.967)">@</div>
<div class="t" style="left:265.6px;top:139.7px;font-size:14.92px;color:#22cc00;transform:scaleX(1.068)">390.693</div>
<div class="t" style="left:338.9px;top:139.7px;font-size:14.92px;color:#22cc00;transform:scaleX(0.980)">Hz</div>
<div class="t" style="left:88.2px;top:157.4px;font-size:14.92px;color:#22cc00;transform:scaleX(1.019)">Max</div>
<div class="t" style="left:127.3px;top:157.4px;font-size:14.92px;color:#22cc00;transform:scaleX(1.215)">=</div>
<div class="t" style="left:147.9px;top:157.4px;font-size:14.92px;color:#22cc00;transform:scaleX(1.074)">26.2318</div>
<div class="t" style="left:226.7px;top:157.4px;font-size:14.92px;color:#22cc00;transform:scaleX(0.973)">Ω</div>
<div class="t" style="left:240.8px;top:157.4px;font-size:14.92px;color:#22cc00;transform:scaleX(0.967)">@</div>
<div class="t" style="left:265.6px;top:157.4px;font-size:14.92px;color:#22cc00;transform:scaleX(1.068)">390.693</div>
<div class="t" style="left:338.9px;top:157.4px;font-size:14.92px;color:#22cc00;transform:scaleX(0.980)">Hz</div>
<div class="t" style="left:88.2px;top:175.1px;font-size:14.92px;color:#22cc00;transform:scaleX(1.022)">Min</div>
<div class="t" style="left:127.3px;top:175.1px;font-size:14.92px;color:#22cc00;transform:scaleX(1.215)">=</div>
<div class="t" style="left:148.2px;top:175.1px;font-size:14.92px;color:#22cc00;transform:scaleX(1.094)">6.57911</div>
<div class="t" style="left:226.7px;top:175.1px;font-size:14.92px;color:#22cc00;transform:scaleX(0.973)">Ω</div>
<div class="t" style="left:240.8px;top:175.1px;font-size:14.92px;color:#22cc00;transform:scaleX(0.967)">@</div>
<div class="t" style="left:265.1px;top:175.1px;font-size:14.92px;color:#22cc00;transform:scaleX(1.066)">100.000</div>
<div class="t" style="left:338.9px;top:175.1px;font-size:14.92px;color:#22cc00;transform:scaleX(0.980)">Hz</div>
<div class="t" style="left:88.9px;top:192.9px;font-size:14.92px;color:#2f5fe0;transform:scaleX(1.031)">Z</div>
<div class="t" style="left:127.3px;top:192.9px;font-size:14.92px;color:#2f5fe0;transform:scaleX(1.215)">=</div>
<div class="t" style="left:147.9px;top:192.9px;font-size:14.92px;color:#2f5fe0;transform:scaleX(1.074)">24.7959</div>
<div class="t" style="left:226.7px;top:192.9px;font-size:14.92px;color:#2f5fe0;transform:scaleX(0.973)">Ω</div>
<div class="t" style="left:240.8px;top:192.9px;font-size:14.92px;color:#2f5fe0;transform:scaleX(0.967)">@</div>
<div class="t" style="left:265.6px;top:192.9px;font-size:14.92px;color:#2f5fe0;transform:scaleX(1.068)">390.693</div>
<div class="t" style="left:338.9px;top:192.9px;font-size:14.92px;color:#2f5fe0;transform:scaleX(0.980)">Hz</div>
<div class="t" style="left:88.2px;top:210.6px;font-size:14.92px;color:#2f5fe0;transform:scaleX(1.019)">Max</div>
<div class="t" style="left:127.3px;top:210.6px;font-size:14.92px;color:#2f5fe0;transform:scaleX(1.215)">=</div>
<div class="t" style="left:148.0px;top:210.6px;font-size:14.92px;color:#2f5fe0;transform:scaleX(1.071)">27.0613</div>
<div class="t" style="left:226.7px;top:210.6px;font-size:14.92px;color:#2f5fe0;transform:scaleX(0.973)">Ω</div>
<div class="t" style="left:240.8px;top:210.6px;font-size:14.92px;color:#2f5fe0;transform:scaleX(0.967)">@</div>
<div class="t" style="left:265.6px;top:210.6px;font-size:14.92px;color:#2f5fe0;transform:scaleX(1.068)">390.693</div>
<div class="t" style="left:338.9px;top:210.6px;font-size:14.92px;color:#2f5fe0;transform:scaleX(0.980)">Hz</div>
<div class="t" style="left:88.2px;top:228.3px;font-size:14.92px;color:#2f5fe0;transform:scaleX(1.022)">Min</div>
<div class="t" style="left:127.3px;top:228.3px;font-size:14.92px;color:#2f5fe0;transform:scaleX(1.215)">=</div>
<div class="t" style="left:147.9px;top:228.3px;font-size:14.92px;color:#2f5fe0;transform:scaleX(1.068)">7.20174</div>
<div class="t" style="left:226.7px;top:228.3px;font-size:14.92px;color:#2f5fe0;transform:scaleX(0.973)">Ω</div>
<div class="t" style="left:240.8px;top:228.3px;font-size:14.92px;color:#2f5fe0;transform:scaleX(0.967)">@</div>
<div class="t" style="left:265.1px;top:228.3px;font-size:14.92px;color:#2f5fe0;transform:scaleX(1.066)">100.000</div>
<div class="t" style="left:338.9px;top:228.3px;font-size:14.92px;color:#2f5fe0;transform:scaleX(0.980)">Hz</div>
<div class="t" style="left:88.6px;top:246.0px;font-size:14.92px;color:#dc0a96;transform:scaleX(1.050)">θz°</div>
<div class="t" style="left:127.3px;top:246.0px;font-size:14.92px;color:#dc0a96;transform:scaleX(1.215)">=</div>
<div class="t" style="left:157.4px;top:246.0px;font-size:14.92px;color:#dc0a96;transform:scaleX(1.063)">75.577</div>
<div class="t" style="left:231.5px;top:246.0px;font-size:14.92px;color:#dc0a96;transform:scaleX(1.080)">°</div>
<div class="t" style="left:240.8px;top:246.0px;font-size:14.92px;color:#dc0a96;transform:scaleX(0.967)">@</div>
<div class="t" style="left:265.6px;top:246.0px;font-size:14.92px;color:#dc0a96;transform:scaleX(1.068)">390.693</div>
<div class="t" style="left:338.9px;top:246.0px;font-size:14.92px;color:#dc0a96;transform:scaleX(0.980)">Hz</div>
<div class="t" style="left:88.2px;top:263.8px;font-size:14.92px;color:#dc0a96;transform:scaleX(1.019)">Max</div>
<div class="t" style="left:127.3px;top:263.8px;font-size:14.92px;color:#dc0a96;transform:scaleX(1.215)">=</div>
<div class="t" style="left:157.4px;top:263.8px;font-size:14.92px;color:#dc0a96;transform:scaleX(1.063)">75.777</div>
<div class="t" style="left:231.5px;top:263.8px;font-size:14.92px;color:#dc0a96;transform:scaleX(1.080)">°</div>
<div class="t" style="left:240.8px;top:263.8px;font-size:14.92px;color:#dc0a96;transform:scaleX(0.967)">@</div>
<div class="t" style="left:265.6px;top:263.8px;font-size:14.92px;color:#dc0a96;transform:scaleX(1.068)">390.693</div>
<div class="t" style="left:338.9px;top:263.8px;font-size:14.92px;color:#dc0a96;transform:scaleX(0.980)">Hz</div>
<div class="t" style="left:88.2px;top:281.5px;font-size:14.92px;color:#dc0a96;transform:scaleX(1.022)">Min</div>
<div class="t" style="left:127.3px;top:281.5px;font-size:14.92px;color:#dc0a96;transform:scaleX(1.215)">=</div>
<div class="t" style="left:156.9px;top:281.5px;font-size:14.92px;color:#dc0a96;transform:scaleX(1.069)">66.000</div>
<div class="t" style="left:231.5px;top:281.5px;font-size:14.92px;color:#dc0a96;transform:scaleX(1.080)">°</div>
<div class="t" style="left:240.8px;top:281.5px;font-size:14.92px;color:#dc0a96;transform:scaleX(0.967)">@</div>
<div class="t" style="left:265.1px;top:281.5px;font-size:14.92px;color:#dc0a96;transform:scaleX(1.066)">100.000</div>
<div class="t" style="left:338.9px;top:281.5px;font-size:14.92px;color:#dc0a96;transform:scaleX(0.980)">Hz</div>
<div class="t" style="left:8.5px;top:667.0px;font-size:16.0px;color:#f2f2f2"><span class="c" style="width:15.80px">起</span><span class="c" style="width:15.80px">点</span></div>
<div class="t" style="left:42.1px;top:665.9px;font-size:16.40px;color:#f2f2f2;transform:scaleX(0.945)">:</div>
<div class="t" style="left:57.0px;top:665.8px;font-size:16.50px;color:#f2f2f2;transform:scaleX(1.038)">100 Hz</div>
<div class="t" style="left:272.5px;top:667.0px;font-size:16.0px;color:#f2f2f2"><span class="c" style="width:15.80px">电</span><span class="c" style="width:15.80px">平</span></div>
<div class="t" style="left:306.1px;top:665.9px;font-size:16.40px;color:#f2f2f2;transform:scaleX(0.945)">:</div>
<div class="t" style="left:320.7px;top:665.8px;font-size:16.50px;color:#f2f2f2;transform:scaleX(1.012)">1 V</div>
<div class="t" style="left:414.5px;top:667.0px;font-size:16.0px;color:#f2f2f2"><span class="c" style="width:15.80px">偏</span><span class="c" style="width:15.80px">置</span></div>
<div class="t" style="left:448.1px;top:665.9px;font-size:16.40px;color:#f2f2f2;transform:scaleX(0.945)">:</div>
<div class="t" style="left:462.2px;top:665.8px;font-size:16.50px;color:#f2f2f2;transform:scaleX(1.023)">0 V</div>
<div class="t" style="left:556.0px;top:665.8px;font-size:16.50px;color:#f2f2f2;transform:scaleX(1.043)">ΔT : ...</div>
<div class="t" style="left:854.7px;top:667.0px;font-size:16.0px;color:#f2f2f2"><span class="c" style="width:15.80px">终</span><span class="c" style="width:15.80px">点</span></div>
<div class="t" style="left:888.3px;top:665.9px;font-size:16.40px;color:#f2f2f2;transform:scaleX(0.945)">:</div>
<div class="t" style="left:903.7px;top:665.8px;font-size:16.50px;color:#f2f2f2;transform:scaleX(1.043)">500kHz</div>
<svg width="970" height="683"><path d="M80.5 139.5H953.0M80.5 196.7H953.0M80.5 254.0H953.0M80.5 311.2H953.0M80.5 368.5H953.0M80.5 425.8H953.0M80.5 483.0H953.0M80.5 540.3H953.0M80.5 597.5H953.0" stroke="#a0a0a0" stroke-width="1.1" stroke-dasharray="3.3 2.3" fill="none"/><path d="M151.5 82.2V654.8M222.5 82.2V654.8M264.0 82.2V654.8M293.5 82.2V654.8M316.4 82.2V654.8M387.4 82.2V654.8M458.4 82.2V654.8M499.9 82.2V654.8M529.4 82.2V654.8M552.3 82.2V654.8M623.3 82.2V654.8M694.3 82.2V654.8M735.8 82.2V654.8M765.3 82.2V654.8M788.1 82.2V654.8M930.1 82.2V654.8" stroke="#b8b8b8" stroke-width="1.1" stroke-dasharray="3.2 2.2" fill="none"/><rect x="80.5" y="82.2" width="872.5" height="572.6" stroke="#9a9a9a" stroke-width="1.3" fill="none"/><path d="M221.3 82.0V655.0" stroke="#e01010" stroke-width="1.3" stroke-dasharray="3 2" fill="none"/><path d="M220.3 657.5L223.5 663.5L217.1 663.5Z" fill="#f00"/><path d="M80.9 558.9C85.6 558.7 100.9 557.7 114.0 557.7C127.1 557.7 161.4 559.0 172.5 558.9C183.6 558.8 185.3 557.6 192.0 556.9C198.7 556.2 209.3 555.4 219.3 554.2C229.3 553.0 248.3 551.3 262.2 548.3C276.1 545.3 304.5 537.0 316.8 533.5C329.1 530.0 340.2 525.6 348.0 523.8C355.8 522.0 365.8 521.2 371.4 521.0C377.0 520.8 379.2 520.8 387.0 522.6C394.8 524.4 414.9 530.0 426.0 533.5C437.1 537.0 448.3 541.6 465.0 547.2C481.7 552.8 520.7 566.4 543.0 572.5C565.3 578.6 598.7 585.8 621.0 590.0C643.3 594.2 679.5 599.4 699.0 601.8C718.5 604.2 740.8 606.5 757.5 606.8C774.2 607.1 802.1 605.8 816.0 603.7C829.9 601.6 845.0 597.0 855.0 592.0C865.0 587.0 878.2 578.6 886.0 568.6C893.8 558.6 905.4 532.3 909.6 521.8C913.8 511.3 912.7 509.1 915.2 494.9C917.7 480.7 924.7 441.4 927.0 422.7C929.3 404.0 930.1 380.5 931.4 363.7C932.7 346.9 934.5 325.8 935.8 304.8C937.1 283.8 939.1 241.4 940.2 216.4C941.3 191.4 942.4 137.1 943.2 129.5C944.0 121.9 945.3 145.9 946.1 163.4C946.9 180.9 948.3 224.9 949.0 251.8C949.7 278.7 950.8 337.7 951.1 352.0" stroke="#e0d820" stroke-width="1.3" fill="none" stroke-linejoin="round"/><rect x="0.0" y="64.0" width="18.0" height="13.0" fill="#dc0a96"/><text x="9.0" y="74.5" font-size="12.5" text-anchor="middle" fill="#111" font-family="Liberation Sans">m</text><rect x="96.5" y="558.9" width="17.5" height="13.6" fill="#c8c030"/><text x="105.2" y="570.0" font-size="12.5" text-anchor="middle" fill="#111" font-family="Liberation Sans">m</text><rect x="211.5" y="555.0" width="15.6" height="12.8" fill="#c8c030"/><text x="219.3" y="565.3" font-size="12.5" text-anchor="middle" fill="#111" font-family="Liberation Sans">M</text><path d="M235.0 537.4L225.6 548.1" stroke="#e0d820" stroke-width="2.2" stroke-linecap="round"/><path d="M221.3 553.0L223.9 546.6L227.3 549.6Z" fill="#e0d820"/><path d="M935.7 87.7A9.6 9.6 0 1 1 929.6 95.0" stroke="#ece422" stroke-width="2.8" fill="none"/><path d="M924.8 93.7L931.9 87.4L933.7 97.3Z" fill="#ece422"/></svg>
<div class="st"></div>
<div style="position:absolute;left:937px;top:686px;width:32px;height:23px;background:#fff;border-top:2px solid #8a8a8a;border-left:2px solid #8a8a8a;border-bottom:1px solid #dcdcdc;border-right:1px solid #dcdcdc"></div>
<svg width="1136" height="710"><g transform="translate(0,-2.5)" stroke="#222" fill="#222" stroke-width="1.6"><path d="M943 698.5H962" fill="none"/><path d="M962 695.5L966 698.5L962 701.5Z" stroke="none"/><path d="M949 698.5L953 693.5H957" fill="none"/><path d="M951 698.5L955 703.5H958" fill="none"/><circle cx="943.5" cy="698.5" r="2" stroke="none"/><rect x="957" y="692" width="3" height="3" stroke="none"/><circle cx="959" cy="703.5" r="1.7" stroke="none"/></g></svg>
<div class="t" style="left:983.3px;top:688.9px;font-size:15.87px;color:#1c1c1c;transform:scaleX(0.935)">2022/04/06 10:11:02</div>
<div class="sb"></div>
<div class="tb"></div>
<div class="t" style="left:1035.0px;top:54.8px;font-size:17.5px;color:#f4f4f4"><span class="c" style="width:17.50px">曲</span><span class="c" style="width:17.50px">线</span></div>
<div class="btn" style="top:84.0px">
<div class="vb"></div>
</div>
<div class="t" style="left:1017.9px;top:99.1px;font-size:17.3px;color:#111"><span class="c" style="width:17.30px">扫</span><span class="c" style="width:17.30px">描</span><span class="c" style="width:17.30px">点</span><span class="c" style="width:17.30px">数</span></div>
<div class="t" style="left:1038.7px;top:133.6px;font-size:15.87px;color:#111;transform:scaleX(1.043)">101</div>
<svg width="1136" height="710"><path d="M1115.3 98.6A9.2 9.2 0 1 1 1109.5 105.6" stroke="#6b6d69" stroke-width="2.6" fill="none"/><path d="M1104.3 104.2L1111.4 97.9L1113.2 107.8Z" fill="#6b6d69"/></svg>
<div class="btn" style="top:158.5px">
<div class="vb"></div>
</div>
<div class="t" style="left:1030.4px;top:173.6px;font-size:17.3px;color:#111"><span class="c" style="width:17.30px">参</span><span class="c" style="width:17.30px">数</span></div>
<div class="t" style="left:1065.6px;top:175.1px;font-size:15.87px;color:#111;transform:scaleX(0.945)">1</div>
<div class="t" style="left:1012.5px;top:206.6px;font-size:17.3px;color:#9c9c9c"><span class="c" style="width:17.30px">关</span></div>
<div class="t" style="left:1029.9px;top:208.1px;font-size:15.87px;color:#9c9c9c;transform:scaleX(0.983)">-</div>
<div class="t" style="left:1035.2px;top:206.6px;font-size:17.3px;color:#111"><span class="c" style="width:17.30px">开</span></div>
<div class="t" style="left:1052.6px;top:208.1px;font-size:15.87px;color:#9c9c9c;transform:scaleX(0.983)">-</div>
<div class="t" style="left:1057.9px;top:206.6px;font-size:17.3px;color:#9c9c9c"><span class="c" style="width:17.30px">保</span><span class="c" style="width:17.30px">持</span></div>
<div class="btn" style="top:233.0px">
<div class="vb"></div>
</div>
<div class="t" style="left:1030.4px;top:248.1px;font-size:17.3px;color:#111"><span class="c" style="width:17.30px">参</span><span class="c" style="width:17.30px">数</span></div>
<div class="t" style="left:1065.3px;top:249.6px;font-size:15.87px;color:#111;transform:scaleX(0.966)">2</div>
<div class="t" style="left:1012.5px;top:281.1px;font-size:17.3px;color:#9c9c9c"><span class="c" style="width:17.30px">关</span></div>
<div class="t" style="left:1029.9px;top:282.6px;font-size:15.87px;color:#9c9c9c;transform:scaleX(0.983)">-</div>
<div class="t" style="left:1035.2px;top:281.1px;font-size:17.3px;color:#9c9c9c"><span class="c" style="width:17.30px">开</span></div>
<div class="t" style="left:1052.6px;top:282.6px;font-size:15.87px;color:#9c9c9c;transform:scaleX(0.983)">-</div>
<div class="t" style="left:1057.9px;top:281.1px;font-size:17.3px;color:#111"><span class="c" style="width:17.30px">保</span><span class="c" style="width:17.30px">持</span></div>
<div class="btn" style="top:307.5px">
<div class="vb"></div>
</div>
<div class="t" style="left:1030.4px;top:322.6px;font-size:17.3px;color:#111"><span class="c" style="width:17.30px">参</span><span class="c" style="width:17.30px">数</span></div>
<div class="t" style="left:1065.5px;top:324.1px;font-size:15.87px;color:#111;transform:scaleX(0.985)">3</div>
<div class="t" style="left:1012.5px;top:355.6px;font-size:17.3px;color:#9c9c9c"><span class="c" style="width:17.30px">关</span></div>
<div class="t" style="left:1029.9px;top:357.1px;font-size:15.87px;color:#9c9c9c;transform:scaleX(0.983)">-</div>
<div class="t" style="left:1035.2px;top:355.6px;font-size:17.3px;color:#9c9c9c"><span class="c" style="width:17.30px">开</span></div>
<div class="t" style="left:1052.6px;top:357.1px;font-size:15.87px;color:#9c9c9c;transform:scaleX(0.983)">-</div>
<div class="t" style="left:1057.9px;top:355.6px;font-size:17.3px;color:#111"><span class="c" style="width:17.30px">保</span><span class="c" style="width:17.30px">持</span></div>
<div class="btn" style="top:382.0px">
<div class="vb"></div>
</div>
<div class="t" style="left:1030.4px;top:397.1px;font-size:17.3px;color:#111"><span class="c" style="width:17.30px">参</span><span class="c" style="width:17.30px">数</span></div>
<div class="t" style="left:1065.5px;top:398.6px;font-size:15.87px;color:#111;transform:scaleX(0.982)">4</div>
<div class="t" style="left:1012.5px;top:430.1px;font-size:17.3px;color:#9c9c9c"><span class="c" style="width:17.30px">关</span></div>
<div class="t" style="left:1029.9px;top:431.6px;font-size:15.87px;color:#9c9c9c;transform:scaleX(0.983)">-</div>
<div class="t" style="left:1035.2px;top:430.1px;font-size:17.3px;color:#9c9c9c"><span class="c" style="width:17.30px">开</span></div>
<div class="t" style="left:1052.6px;top:431.6px;font-size:15.87px;color:#9c9c9c;transform:scaleX(0.983)">-</div>
<div class="t" style="left:1057.9px;top:430.1px;font-size:17.3px;color:#111"><span class="c" style="width:17.30px">保</span><span class="c" style="width:17.30px">持</span></div>
<div class="btn" style="top:456.5px">
<div class="vb"></div>
</div>
<div class="t" style="left:1035.2px;top:471.6px;font-size:17.3px;color:#111"><span class="c" style="width:17.30px">分</span><span class="c" style="width:17.30px">屏</span></div>
<div class="t" style="left:1033.4px;top:506.1px;font-size:15.87px;color:#111;transform:scaleX(0.945)">1</div>
<div class="t" style="left:1042.4px;top:506.1px;font-size:15.87px;color:#9c9c9c;transform:scaleX(1.045)">-2-4</div>
<div class="btn" style="top:613px;height:71px;border-bottom:none;border-radius:4px 4px 0 0"></div>
<div class="t" style="left:1035.2px;top:639.6px;font-size:17.3px;color:#111"><span class="c" style="width:17.30px">返</span><span class="c" style="width:17.30px">回</span></div>
</div>
<div class="p" style="left:8px;top:716px;width:1136px;height:709px">
<div class="hd"></div>
<div class="t" style="left:42.5px;top:11.9px;font-size:22.0px;color:#f4f4f4"><span class="c" style="width:21.80px">曲</span><span class="c" style="width:21.80px">线</span><span class="c" style="width:21.80px">显</span><span class="c" style="width:21.80px">示</span></div>
<svg width="1136" height="50"><path d="M1053.5 10.5 L1068.5 24.5 L1065.5 24.5 L1065.5 37 L1057.5 37 L1057.5 25.5 L1049.5 25.5 L1049.5 37 L1041.5 37 L1041.5 24.5 L1038.5 24.5 Z" fill="#fff" stroke="#111" stroke-width="2" stroke-linejoin="miter"/></svg>
<div class="t" style="left:8.1px;top:45.8px;font-size:16.19px;color:#f2f2f2;transform:scaleX(1.075)">Ct  =  -2.15312μF</div>
<div class="t" style="left:199.0px;top:45.8px;font-size:16.19px;color:#f2f2f2;transform:scaleX(1.104)">Dt  =   0.22214</div>
<div class="t" style="left:389.5px;top:45.8px;font-size:16.19px;color:#f2f2f2;transform:scaleX(1.100)">Kp  =   112.016</div>
<div class="t" style="left:580.1px;top:45.8px;font-size:16.19px;color:#f2f2f2;transform:scaleX(1.090)">Qm=  -102.679</div>
<div class="t" style="left:771.2px;top:45.8px;font-size:16.19px;color:#f2f2f2;transform:scaleX(1.068)">ΔF  =   499.900kHz</div>
<div class="t" style="left:84.4px;top:62.8px;font-size:14.71px;color:#d6cc2c;transform:scaleX(1.073)">2.99565mH/</div>
<div class="t" style="left:306.7px;top:62.8px;font-size:14.71px;color:#22cc00;transform:scaleX(1.079)">11.3906kΩ/</div>
<div class="t" style="left:570.3px;top:62.8px;font-size:14.71px;color:#2f5fe0;transform:scaleX(1.064)">18.5174kΩ/</div>
<div class="t" style="left:791.8px;top:62.8px;font-size:14.71px;color:#dc0a96;transform:scaleX(1.089)">8.46758 °/</div>
<div class="t" style="left:12.4px;top:74.1px;font-size:13.12px;color:#d6cc2c;transform:scaleX(1.080)">35.3994m</div>
<div class="t" style="left:12.4px;top:131.4px;font-size:13.12px;color:#d6cc2c;transform:scaleX(1.080)">32.4038m</div>
<div class="t" style="left:12.3px;top:188.6px;font-size:13.12px;color:#d6cc2c;transform:scaleX(1.083)">29.4081m</div>
<div class="t" style="left:12.3px;top:245.9px;font-size:13.12px;color:#d6cc2c;transform:scaleX(1.083)">26.4125m</div>
<div class="t" style="left:12.3px;top:303.1px;font-size:13.12px;color:#d6cc2c;transform:scaleX(1.083)">23.4169m</div>
<div class="t" style="left:12.3px;top:360.4px;font-size:13.12px;color:#d6cc2c;transform:scaleX(1.083)">20.4212m</div>
<div class="t" style="left:12.0px;top:417.7px;font-size:13.12px;color:#d6cc2c;transform:scaleX(1.079)">17.4256m</div>
<div class="t" style="left:12.0px;top:474.9px;font-size:13.12px;color:#d6cc2c;transform:scaleX(1.079)">14.4299m</div>
<div class="t" style="left:12.0px;top:532.2px;font-size:13.12px;color:#d6cc2c;transform:scaleX(1.097)">11.4343m</div>
<div class="t" style="left:12.4px;top:589.4px;font-size:13.12px;color:#d6cc2c;transform:scaleX(1.080)">8.43862m</div>
<div class="t" style="left:12.4px;top:646.7px;font-size:13.12px;color:#d6cc2c;transform:scaleX(1.078)">5.44298m</div>
<div class="t" style="left:497.5px;top:74.1px;font-size:13.12px;color:#2f5fe0;transform:scaleX(1.076)">169.750k</div>
<div class="t" style="left:497.5px;top:131.4px;font-size:13.12px;color:#2f5fe0;transform:scaleX(1.076)">151.232k</div>
<div class="t" style="left:497.5px;top:188.6px;font-size:13.12px;color:#2f5fe0;transform:scaleX(1.076)">132.715k</div>
<div class="t" style="left:497.5px;top:245.9px;font-size:13.12px;color:#2f5fe0;transform:scaleX(1.095)">114.198k</div>
<div class="t" style="left:497.8px;top:303.1px;font-size:13.12px;color:#2f5fe0;transform:scaleX(1.083)">95.6803k</div>
<div class="t" style="left:497.8px;top:360.4px;font-size:13.12px;color:#2f5fe0;transform:scaleX(1.078)">77.1629k</div>
<div class="t" style="left:497.9px;top:417.7px;font-size:13.12px;color:#2f5fe0;transform:scaleX(1.075)">58.6455k</div>
<div class="t" style="left:498.2px;top:474.9px;font-size:13.12px;color:#2f5fe0;transform:scaleX(1.077)">40.1282k</div>
<div class="t" style="left:497.8px;top:532.2px;font-size:13.12px;color:#2f5fe0;transform:scaleX(1.080)">21.6108k</div>
<div class="t" style="left:497.9px;top:589.4px;font-size:13.12px;color:#2f5fe0;transform:scaleX(1.078)">3.09343k</div>
<div class="t" style="left:497.5px;top:646.7px;font-size:13.12px;color:#2f5fe0;transform:scaleX(1.076)">15.4239k</div>
<div class="t" style="left:493.6px;top:646.7px;font-size:13.12px;color:#2f5fe0;transform:scaleX(0.983)">-</div>
<div class="t" style="left:88.3px;top:86.5px;font-size:14.92px;color:#d6cc2c;transform:scaleX(0.925)">Ls</div>
<div class="t" style="left:127.3px;top:86.5px;font-size:14.92px;color:#d6cc2c;transform:scaleX(1.215)">=</div>
<div class="t" style="left:148.3px;top:86.5px;font-size:14.92px;color:#d6cc2c;transform:scaleX(1.066)">32.9031</div>
<div class="t" style="left:214.2px;top:86.5px;font-size:14.92px;color:#d6cc2c;transform:scaleX(1.040)">mH</div>
<div class="t" style="left:240.8px;top:86.5px;font-size:14.92px;color:#d6cc2c;transform:scaleX(0.967)">@</div>
<div class="t" style="left:265.9px;top:86.5px;font-size:14.92px;color:#d6cc2c;transform:scaleX(1.065)">459.177</div>
<div class="t" style="left:330.7px;top:86.5px;font-size:14.92px;color:#d6cc2c;transform:scaleX(1.016)">kHz</div>
<div class="t" style="left:88.2px;top:104.2px;font-size:14.92px;color:#d6cc2c;transform:scaleX(1.019)">Max</div>
<div class="t" style="left:127.3px;top:104.2px;font-size:14.92px;color:#d6cc2c;transform:scaleX(1.215)">=</div>
<div class="t" style="left:148.3px;top:104.2px;font-size:14.92px;color:#d6cc2c;transform:scaleX(1.066)">32.9031</div>
<div class="t" style="left:214.2px;top:104.2px;font-size:14.92px;color:#d6cc2c;transform:scaleX(1.040)">mH</div>
<div class="t" style="left:240.8px;top:104.2px;font-size:14.92px;color:#d6cc2c;transform:scaleX(0.967)">@</div>
<div class="t" style="left:265.9px;top:104.2px;font-size:14.92px;color:#d6cc2c;transform:scaleX(1.065)">459.177</div>
<div class="t" style="left:330.7px;top:104.2px;font-size:14.92px;color:#d6cc2c;transform:scaleX(1.016)">kHz</div>
<div class="t" style="left:88.2px;top:121.9px;font-size:14.92px;color:#d6cc2c;transform:scaleX(1.022)">Min</div>
<div class="t" style="left:127.3px;top:121.9px;font-size:14.92px;color:#d6cc2c;transform:scaleX(1.215)">=</div>
<div class="t" style="left:148.3px;top:121.9px;font-size:14.92px;color:#d6cc2c;transform:scaleX(1.063)">7.93935</div>
<div class="t" style="left:214.2px;top:121.9px;font-size:14.92px;color:#d6cc2c;transform:scaleX(1.040)">mH</div>
<div class="t" style="left:240.8px;top:121.9px;font-size:14.92px;color:#d6cc2c;transform:scaleX(0.967)">@</div>
<div class="t" style="left:265.4px;top:121.9px;font-size:14.92px;color:#d6cc2c;transform:scaleX(1.069)">91.0282</div>
<div class="t" style="left:330.7px;top:121.9px;font-size:14.92px;color:#d6cc2c;transform:scaleX(1.016)">kHz</div>
<div class="t" style="left:89.1px;top:139.7px;font-size:14.92px;color:#22cc00;transform:scaleX(0.954)">Xs</div>
<div class="t" style="left:127.3px;top:139.7px;font-size:14.92px;color:#22cc00;transform:scaleX(1.215)">=</div>
<div class="t" style="left:148.0px;top:139.7px;font-size:14.92px;color:#22cc00;transform:scaleX(1.068)">94.9285</div>
<div class="t" style="left:218.7px;top:139.7px;font-size:14.92px;color:#22cc00;transform:scaleX(1.012)">kΩ</div>
<div class="t" style="left:240.8px;top:139.7px;font-size:14.92px;color:#22cc00;transform:scaleX(0.967)">@</div>
<div class="t" style="left:265.9px;top:139.7px;font-size:14.92px;color:#22cc00;transform:scaleX(1.065)">459.177</div>
<div class="t" style="left:330.7px;top:139.7px;font-size:14.92px;color:#22cc00;transform:scaleX(1.016)">kHz</div>
<div class="t" style="left:88.2px;top:157.4px;font-size:14.92px;color:#22cc00;transform:scaleX(1.019)">Max</div>
<div class="t" style="left:127.3px;top:157.4px;font-size:14.92px;color:#22cc00;transform:scaleX(1.215)">=</div>
<div class="t" style="left:148.0px;top:157.4px;font-size:14.92px;color:#22cc00;transform:scaleX(1.068)">94.9285</div>
<div class="t" style="left:218.7px;top:157.4px;font-size:14.92px;color:#22cc00;transform:scaleX(1.012)">kΩ</div>
<div class="t" style="left:240.8px;top:157.4px;font-size:14.92px;color:#22cc00;transform:scaleX(0.967)">@</div>
<div class="t" style="left:265.9px;top:157.4px;font-size:14.92px;color:#22cc00;transform:scaleX(1.065)">459.177</div>
<div class="t" style="left:330.7px;top:157.4px;font-size:14.92px;color:#22cc00;transform:scaleX(1.016)">kHz</div>
<div class="t" style="left:88.2px;top:175.1px;font-size:14.92px;color:#22cc00;transform:scaleX(1.022)">Min</div>
<div class="t" style="left:127.3px;top:175.1px;font-size:14.92px;color:#22cc00;transform:scaleX(1.215)">=</div>
<div class="t" style="left:147.9px;top:175.1px;font-size:14.92px;color:#22cc00;transform:scaleX(1.071)">6.57670</div>
<div class="t" style="left:226.7px;top:175.1px;font-size:14.92px;color:#22cc00;transform:scaleX(0.973)">Ω</div>
<div class="t" style="left:240.8px;top:175.1px;font-size:14.92px;color:#22cc00;transform:scaleX(0.967)">@</div>
<div class="t" style="left:265.1px;top:175.1px;font-size:14.92px;color:#22cc00;transform:scaleX(1.066)">100.000</div>
<div class="t" style="left:338.9px;top:175.1px;font-size:14.92px;color:#22cc00;transform:scaleX(0.980)">Hz</div>
<div class="t" style="left:574.1px;top:86.5px;font-size:14.92px;color:#2f5fe0;transform:scaleX(1.031)">Z</div>
<div class="t" style="left:612.5px;top:86.5px;font-size:14.92px;color:#2f5fe0;transform:scaleX(1.215)">=</div>
<div class="t" style="left:633.6px;top:86.5px;font-size:14.92px;color:#2f5fe0;transform:scaleX(1.064)">101.821</div>
<div class="t" style="left:703.9px;top:86.5px;font-size:14.92px;color:#2f5fe0;transform:scaleX(1.012)">kΩ</div>
<div class="t" style="left:726.0px;top:86.5px;font-size:14.92px;color:#2f5fe0;transform:scaleX(0.967)">@</div>
<div class="t" style="left:751.1px;top:86.5px;font-size:14.92px;color:#2f5fe0;transform:scaleX(1.065)">459.177</div>
<div class="t" style="left:815.9px;top:86.5px;font-size:14.92px;color:#2f5fe0;transform:scaleX(1.016)">kHz</div>
<div class="t" style="left:573.4px;top:104.2px;font-size:14.92px;color:#2f5fe0;transform:scaleX(1.019)">Max</div>
<div class="t" style="left:612.5px;top:104.2px;font-size:14.92px;color:#2f5fe0;transform:scaleX(1.215)">=</div>
<div class="t" style="left:633.3px;top:104.2px;font-size:14.92px;color:#2f5fe0;transform:scaleX(1.069)">154.319</div>
<div class="t" style="left:703.9px;top:104.2px;font-size:14.92px;color:#2f5fe0;transform:scaleX(1.012)">kΩ</div>
<div class="t" style="left:726.0px;top:104.2px;font-size:14.92px;color:#2f5fe0;transform:scaleX(0.967)">@</div>
<div class="t" style="left:750.8px;top:104.2px;font-size:14.92px;color:#2f5fe0;transform:scaleX(1.065)">500.000</div>
<div class="t" style="left:815.9px;top:104.2px;font-size:14.92px;color:#2f5fe0;transform:scaleX(1.016)">kHz</div>
<div class="t" style="left:573.4px;top:121.9px;font-size:14.92px;color:#2f5fe0;transform:scaleX(1.022)">Min</div>
<div class="t" style="left:612.5px;top:121.9px;font-size:14.92px;color:#2f5fe0;transform:scaleX(1.215)">=</div>
<div class="t" style="left:633.5px;top:121.9px;font-size:14.92px;color:#2f5fe0;transform:scaleX(1.063)">7.19895</div>
<div class="t" style="left:711.9px;top:121.9px;font-size:14.92px;color:#2f5fe0;transform:scaleX(0.973)">Ω</div>
<div class="t" style="left:726.0px;top:121.9px;font-size:14.92px;color:#2f5fe0;transform:scaleX(0.967)">@</div>
<div class="t" style="left:750.3px;top:121.9px;font-size:14.92px;color:#2f5fe0;transform:scaleX(1.066)">100.000</div>
<div class="t" style="left:824.1px;top:121.9px;font-size:14.92px;color:#2f5fe0;transform:scaleX(0.980)">Hz</div>
<div class="t" style="left:573.8px;top:139.7px;font-size:14.92px;color:#dc0a96;transform:scaleX(1.050)">θz°</div>
<div class="t" style="left:612.5px;top:139.7px;font-size:14.92px;color:#dc0a96;transform:scaleX(1.215)">=</div>
<div class="t" style="left:642.4px;top:139.7px;font-size:14.92px;color:#dc0a96;transform:scaleX(1.067)">68.797</div>
<div class="t" style="left:716.7px;top:139.7px;font-size:14.92px;color:#dc0a96;transform:scaleX(1.080)">°</div>
<div class="t" style="left:726.0px;top:139.7px;font-size:14.92px;color:#dc0a96;transform:scaleX(0.967)">@</div>
<div class="t" style="left:751.1px;top:139.7px;font-size:14.92px;color:#dc0a96;transform:scaleX(1.065)">459.177</div>
<div class="t" style="left:815.9px;top:139.7px;font-size:14.92px;color:#dc0a96;transform:scaleX(1.016)">kHz</div>
<div class="t" style="left:573.4px;top:157.4px;font-size:14.92px;color:#dc0a96;transform:scaleX(1.019)">Max</div>
<div class="t" style="left:612.5px;top:157.4px;font-size:14.92px;color:#dc0a96;transform:scaleX(1.215)">=</div>
<div class="t" style="left:642.4px;top:157.4px;font-size:14.92px;color:#dc0a96;transform:scaleX(1.067)">94.352</div>
<div class="t" style="left:716.7px;top:157.4px;font-size:14.92px;color:#dc0a96;transform:scaleX(1.080)">°</div>
<div class="t" style="left:726.0px;top:157.4px;font-size:14.92px;color:#dc0a96;transform:scaleX(0.967)">@</div>
<div class="t" style="left:750.6px;top:157.4px;font-size:14.92px;color:#dc0a96;transform:scaleX(1.074)">299.938</div>
<div class="t" style="left:815.9px;top:157.4px;font-size:14.92px;color:#dc0a96;transform:scaleX(1.016)">kHz</div>
<div class="t" style="left:573.4px;top:175.1px;font-size:14.92px;color:#dc0a96;transform:scaleX(1.022)">Min</div>
<div class="t" style="left:612.5px;top:175.1px;font-size:14.92px;color:#dc0a96;transform:scaleX(1.215)">=</div>
<div class="t" style="left:642.1px;top:175.1px;font-size:14.92px;color:#dc0a96;transform:scaleX(1.073)">23.789</div>
<div class="t" style="left:716.7px;top:175.1px;font-size:14.92px;color:#dc0a96;transform:scaleX(1.080)">°</div>
<div class="t" style="left:726.0px;top:175.1px;font-size:14.92px;color:#dc0a96;transform:scaleX(0.967)">@</div>
<div class="t" style="left:750.8px;top:175.1px;font-size:14.92px;color:#dc0a96;transform:scaleX(1.065)">500.000</div>
<div class="t" style="left:815.9px;top:175.1px;font-size:14.92px;color:#dc0a96;transform:scaleX(1.016)">kHz</div>
<div class="t" style="left:8.5px;top:667.0px;font-size:16.0px;color:#f2f2f2"><span class="c" style="width:15.80px">起</span><span class="c" style="width:15.80px">点</span></div>
<div class="t" style="left:42.1px;top:665.9px;font-size:16.40px;color:#f2f2f2;transform:scaleX(0.945)">:</div>
<div class="t" style="left:57.0px;top:665.8px;font-size:16.50px;color:#f2f2f2;transform:scaleX(1.038)">100 Hz</div>
<div class="t" style="left:272.5px;top:667.0px;font-size:16.0px;color:#f2f2f2"><span class="c" style="width:15.80px">电</span><span class="c" style="width:15.80px">平</span></div>
<div class="t" style="left:306.1px;top:665.9px;font-size:16.40px;color:#f2f2f2;transform:scaleX(0.945)">:</div>
<div class="t" style="left:320.7px;top:665.8px;font-size:16.50px;color:#f2f2f2;transform:scaleX(1.012)">1 V</div>
<div class="t" style="left:414.5px;top:667.0px;font-size:16.0px;color:#f2f2f2"><span class="c" style="width:15.80px">偏</span><span class="c" style="width:15.80px">置</span></div>
<div class="t" style="left:448.1px;top:665.9px;font-size:16.40px;color:#f2f2f2;transform:scaleX(0.945)">:</div>
<div class="t" style="left:462.2px;top:665.8px;font-size:16.50px;color:#f2f2f2;transform:scaleX(1.023)">0 V</div>
<div class="t" style="left:556.0px;top:665.8px;font-size:16.50px;color:#f2f2f2;transform:scaleX(1.052)">ΔT : 0.664 s</div>
<div class="t" style="left:854.7px;top:667.0px;font-size:16.0px;color:#f2f2f2"><span class="c" style="width:15.80px">终</span><span class="c" style="width:15.80px">点</span></div>
<div class="t" style="left:888.3px;top:665.9px;font-size:16.40px;color:#f2f2f2;transform:scaleX(0.945)">:</div>
<div class="t" style="left:903.7px;top:665.8px;font-size:16.50px;color:#f2f2f2;transform:scaleX(1.043)">500kHz</div>
<svg width="970" height="683"><path d="M80.5 139.5H468.0M80.5 196.7H468.0M80.5 254.0H468.0M80.5 311.2H468.0M80.5 368.5H468.0M80.5 425.8H468.0M80.5 483.0H468.0M80.5 540.3H468.0M80.5 597.5H468.0" stroke="#a0a0a0" stroke-width="1.1" stroke-dasharray="3.3 2.3" fill="none"/><path d="M112.0 82.2V654.8M143.6 82.2V654.8M162.0 82.2V654.8M175.1 82.2V654.8M185.3 82.2V654.8M216.8 82.2V654.8M248.3 82.2V654.8M266.8 82.2V654.8M279.9 82.2V654.8M290.0 82.2V654.8M321.6 82.2V654.8M353.1 82.2V654.8M371.5 82.2V654.8M384.6 82.2V654.8M394.8 82.2V654.8M457.8 82.2V654.8" stroke="#b8b8b8" stroke-width="1.1" stroke-dasharray="3.2 2.2" fill="none"/><rect x="80.5" y="82.2" width="387.5" height="572.6" stroke="#9a9a9a" stroke-width="1.3" fill="none"/><path d="M565.7 139.5H953.0M565.7 196.7H953.0M565.7 254.0H953.0M565.7 311.2H953.0M565.7 368.5H953.0M565.7 425.8H953.0M565.7 483.0H953.0M565.7 540.3H953.0M565.7 597.5H953.0" stroke="#a0a0a0" stroke-width="1.1" stroke-dasharray="3.3 2.3" fill="none"/><path d="M597.2 82.2V654.8M628.7 82.2V654.8M647.2 82.2V654.8M660.3 82.2V654.8M670.4 82.2V654.8M701.9 82.2V654.8M733.4 82.2V654.8M751.9 82.2V654.8M765.0 82.2V654.8M775.1 82.2V654.8M806.6 82.2V654.8M838.1 82.2V654.8M856.6 82.2V654.8M869.7 82.2V654.8M879.8 82.2V654.8M942.9 82.2V654.8" stroke="#b8b8b8" stroke-width="1.1" stroke-dasharray="3.2 2.2" fill="none"/><rect x="565.7" y="82.2" width="387.3" height="572.6" stroke="#9a9a9a" stroke-width="1.3" fill="none"/><path d="M462.7 82.0V655.0" stroke="#e01010" stroke-width="1.3" stroke-dasharray="3 2" fill="none"/><path d="M461.7 658.5L464.9 664.5L458.5 664.5Z" fill="#f00"/><path d="M949.0 82.0V655.0" stroke="#e01010" stroke-width="1.3" stroke-dasharray="3 2" fill="none"/><path d="M948.0 658.5L951.2 664.5L944.8 664.5Z" fill="#f00"/><path d="M80.3 558.7C81.4 558.7 86.2 557.0 87.8 558.7C89.4 560.4 90.6 570.9 91.8 570.7C93.0 570.5 92.1 559.5 96.5 557.6C100.9 555.7 114.8 558.4 122.6 557.6C130.4 556.8 143.4 554.7 150.8 552.2C158.2 549.7 169.0 543.7 174.6 540.3C180.2 536.9 185.1 531.2 189.8 528.4C194.5 525.6 203.5 521.7 207.2 520.8C210.9 519.9 212.1 520.4 215.8 521.9C219.5 523.4 226.1 526.2 233.2 531.6C240.3 537.0 257.0 553.3 265.7 559.8C274.4 566.3 283.7 571.8 293.9 577.2C304.1 582.6 325.5 593.6 337.3 597.8C349.1 602.0 367.0 605.3 376.3 606.5C385.6 607.7 396.2 607.9 402.4 606.5C408.6 605.1 415.1 601.5 419.7 596.7C424.3 591.9 431.2 582.1 434.9 572.8C438.6 563.5 443.3 545.2 445.8 531.6C448.3 518.0 450.9 491.3 452.3 477.4C453.7 463.5 454.7 450.2 455.5 434.0C456.3 417.8 457.2 385.4 458.0 364.0C458.8 342.6 460.3 309.7 461.0 284.0C461.7 258.3 462.6 204.0 463.0 184.0C463.4 164.0 463.7 146.9 464.0 144.0C464.3 141.1 464.7 142.6 465.0 164.0C465.3 185.4 465.9 275.4 466.0 294.0" stroke="#e0d820" stroke-width="1.3" fill="none" stroke-linejoin="round"/><path d="M80.3 606.9C99.0 606.8 183.2 606.9 211.5 606.5C239.8 606.1 260.7 605.4 278.7 604.3C296.7 603.2 321.2 601.8 337.3 598.9C353.4 596.0 380.7 588.4 391.5 583.7C402.3 579.0 407.0 574.1 413.2 566.3C419.4 558.5 430.2 540.6 434.9 529.4C439.6 518.2 443.3 500.3 445.8 488.2C448.3 476.1 451.1 452.5 452.3 444.8C453.5 437.1 453.7 445.5 454.4 434.0C455.1 422.5 456.2 388.3 457.0 364.0C457.8 339.7 459.3 289.7 460.0 264.0C460.7 238.3 461.4 201.4 462.0 184.0C462.6 166.6 463.7 148.0 464.0 142.0" stroke="#30e010" stroke-width="1.3" fill="none" stroke-linejoin="round"/><path d="M566.1 320.1C566.9 318.7 569.8 312.5 571.6 310.3C573.4 308.1 577.1 306.9 578.5 304.4C579.9 301.9 579.1 296.8 581.5 292.6C583.9 288.4 591.8 278.4 595.2 274.9C598.6 271.4 603.0 268.7 605.0 268.0C607.0 267.3 607.6 271.0 609.0 270.0C610.4 269.0 611.8 263.6 614.9 261.2C618.0 258.8 626.1 255.0 630.6 253.3C635.1 251.6 640.7 250.3 646.3 249.4C651.9 248.5 665.8 248.7 669.9 247.0C674.0 245.3 673.4 238.2 674.8 237.6C676.2 237.0 675.9 243.1 679.7 242.5C683.5 241.9 693.4 237.8 701.3 233.7C709.2 229.6 725.2 219.5 734.7 214.0C744.2 208.5 757.7 200.3 768.1 195.4C778.5 190.5 793.4 184.0 807.4 179.6C821.4 175.2 850.3 171.8 866.3 164.9C882.3 158.0 909.3 135.7 919.4 131.5C929.5 127.3 933.9 132.3 937.1 135.4C940.3 138.5 940.9 145.0 942.0 153.1C943.1 161.2 944.2 178.4 944.9 192.4C945.6 206.4 946.3 224.6 946.9 251.3C947.5 278.0 948.5 345.8 948.9 379.0C949.3 412.2 949.4 469.0 949.5 484.0" stroke="#e81ca4" stroke-width="1.3" fill="none" stroke-linejoin="round"/><path d="M565.9 606.5C587.7 606.4 683.9 606.5 718.2 606.1C752.5 605.7 786.2 605.0 805.8 603.8C825.4 602.6 843.3 599.7 855.2 597.5C867.1 595.3 880.9 591.8 888.9 588.6C896.9 585.4 906.2 579.9 911.3 575.1C916.4 570.3 921.6 562.0 924.8 554.9C928.0 547.8 931.7 535.3 933.8 525.7C935.9 516.1 938.0 501.0 939.4 487.5C940.8 474.0 942.8 449.0 943.9 431.4C945.0 413.8 946.5 385.1 947.2 364.0C947.9 342.9 948.5 309.6 949.0 284.0C949.5 258.4 950.5 204.8 950.8 184.5C951.1 164.2 951.0 148.1 951.0 142.0" stroke="#3068f0" stroke-width="1.3" fill="none" stroke-linejoin="round"/><rect x="455.0" y="129.0" width="17.0" height="13.0" fill="#5ad818"/><text x="463.5" y="139.5" font-size="12.5" text-anchor="middle" fill="#111" font-family="Liberation Sans">M</text><rect x="77.0" y="592.4" width="10.8" height="14.5" fill="#22c010"/><text x="82.4" y="604.4" font-size="12.5" text-anchor="middle" fill="#111" font-family="Liberation Sans">m</text><rect x="380.7" y="592.4" width="17.3" height="14.5" fill="#c8c030"/><text x="389.4" y="604.4" font-size="12.5" text-anchor="middle" fill="#111" font-family="Liberation Sans">m</text><rect x="920.4" y="128.6" width="17.6" height="13.7" fill="#dc0a96"/><text x="929.2" y="139.8" font-size="12.5" text-anchor="middle" fill="#111" font-family="Liberation Sans">M</text><rect x="945.0" y="129.5" width="16.6" height="12.8" fill="#2f64d0"/><text x="953.3" y="139.8" font-size="12.5" text-anchor="middle" fill="#111" font-family="Liberation Sans">M</text><rect x="556.5" y="592.0" width="18.0" height="14.5" fill="#2f64d0"/><text x="565.5" y="604.0" font-size="12.5" text-anchor="middle" fill="#111" font-family="Liberation Sans">m</text><rect x="943.9" y="592.0" width="17.9" height="14.5" fill="#dc0a96"/><text x="952.8" y="604.0" font-size="12.5" text-anchor="middle" fill="#111" font-family="Liberation Sans">m</text><path d="M502.7 65.0L492.5 75.4" stroke="#30e010" stroke-width="2.2" stroke-linecap="round"/><path d="M488.0 80.0L490.9 73.7L494.2 77.0Z" fill="#30e010"/><path d="M484.0 276.0L473.9 286.1" stroke="#30e010" stroke-width="2.2" stroke-linecap="round"/><path d="M469.3 290.7L472.3 284.5L475.5 287.7Z" fill="#30e010"/><path d="M484.0 362.7L473.9 372.7" stroke="#e0d820" stroke-width="2.2" stroke-linecap="round"/><path d="M469.3 377.3L472.3 371.1L475.5 374.4Z" fill="#e0d820"/><path d="M970.5 111.9L958.8 121.5" stroke="#3068f0" stroke-width="2.2" stroke-linecap="round"/><path d="M953.8 125.6L957.4 119.7L960.3 123.3Z" fill="#3068f0"/><path d="M969.7 588.6L963.1 595.2" stroke="#e81ca4" stroke-width="2.2" stroke-linecap="round"/><path d="M958.5 599.8L961.5 593.6L964.7 596.8Z" fill="#e81ca4"/><path d="M450.7 88.2A9.6 9.6 0 1 1 444.6 95.5" stroke="#ece422" stroke-width="2.8" fill="none"/><path d="M439.8 94.2L446.9 87.9L448.7 97.8Z" fill="#ece422"/></svg>
<div class="st"></div>
<div style="position:absolute;left:937px;top:686px;width:32px;height:23px;background:#fff;border-top:2px solid #8a8a8a;border-left:2px solid #8a8a8a;border-bottom:1px solid #dcdcdc;border-right:1px solid #dcdcdc"></div>
<svg width="1136" height="710"><g transform="translate(0,-2.5)" stroke="#222" fill="#222" stroke-width="1.6"><path d="M943 698.5H962" fill="none"/><path d="M962 695.5L966 698.5L962 701.5Z" stroke="none"/><path d="M949 698.5L953 693.5H957" fill="none"/><path d="M951 698.5L955 703.5H958" fill="none"/><circle cx="943.5" cy="698.5" r="2" stroke="none"/><rect x="957" y="692" width="3" height="3" stroke="none"/><circle cx="959" cy="703.5" r="1.7" stroke="none"/></g></svg>
<div class="t" style="left:983.3px;top:688.9px;font-size:15.87px;color:#1c1c1c;transform:scaleX(0.924)">2022/04/06 10:13:14</div>
<div class="sb"></div>
<div class="tb"></div>
<div class="t" style="left:1035.0px;top:54.8px;font-size:17.5px;color:#f4f4f4"><span class="c" style="width:17.50px">曲</span><span class="c" style="width:17.50px">线</span></div>
<div class="btn" style="top:84.0px">
<div class="vb"></div>
</div>
<div class="t" style="left:1017.9px;top:99.1px;font-size:17.3px;color:#111"><span class="c" style="width:17.30px">扫</span><span class="c" style="width:17.30px">描</span><span class="c" style="width:17.30px">点</span><span class="c" style="width:17.30px">数</span></div>
<div class="t" style="left:1038.7px;top:133.6px;font-size:15.87px;color:#111;transform:scaleX(1.043)">101</div>
<svg width="1136" height="710"><path d="M1115.3 98.6A9.2 9.2 0 1 1 1109.5 105.6" stroke="#6b6d69" stroke-width="2.6" fill="none"/><path d="M1104.3 104.2L1111.4 97.9L1113.2 107.8Z" fill="#6b6d69"/></svg>
<div class="btn" style="top:158.5px">
<div class="vb"></div>
</div>
<div class="t" style="left:1030.4px;top:173.6px;font-size:17.3px;color:#111"><span class="c" style="width:17.30px">参</span><span class="c" style="width:17.30px">数</span></div>
<div class="t" style="left:1065.6px;top:175.1px;font-size:15.87px;color:#111;transform:scaleX(0.945)">1</div>
<div class="t" style="left:1012.5px;top:206.6px;font-size:17.3px;color:#9c9c9c"><span class="c" style="width:17.30px">关</span></div>
<div class="t" style="left:1029.9px;top:208.1px;font-size:15.87px;color:#9c9c9c;transform:scaleX(0.983)">-</div>
<div class="t" style="left:1035.2px;top:206.6px;font-size:17.3px;color:#111"><span class="c" style="width:17.30px">开</span></div>
<div class="t" style="left:1052.6px;top:208.1px;font-size:15.87px;color:#9c9c9c;transform:scaleX(0.983)">-</div>
<div class="t" style="left:1057.9px;top:206.6px;font-size:17.3px;color:#9c9c9c"><span class="c" style="width:17.30px">保</span><span class="c" style="width:17.30px">持</span></div>
<div class="btn" style="top:233.0px">
<div class="vb"></div>
</div>
<div class="t" style="left:1030.4px;top:248.1px;font-size:17.3px;color:#111"><span class="c" style="width:17.30px">参</span><span class="c" style="width:17.30px">数</span></div>
<div class="t" style="left:1065.3px;top:249.6px;font-size:15.87px;color:#111;transform:scaleX(0.966)">2</div>
<div class="t" style="left:1012.5px;top:281.1px;font-size:17.3px;color:#9c9c9c"><span class="c" style="width:17.30px">关</span></div>
<div class="t" style="left:1029.9px;top:282.6px;font-size:15.87px;color:#9c9c9c;transform:scaleX(0.983)">-</div>
<div class="t" style="left:1035.2px;top:281.1px;font-size:17.3px;color:#111"><span class="c" style="width:17.30px">开</span></div>
<div class="t" style="left:1052.6px;top:282.6px;font-size:15.87px;color:#9c9c9c;transform:scaleX(0.983)">-</div>
<div class="t" style="left:1057.9px;top:281.1px;font-size:17.3px;color:#9c9c9c"><span class="c" style="width:17.30px">保</span><span class="c" style="width:17.30px">持</span></div>
<div class="btn" style="top:307.5px">
<div class="vb"></div>
</div>
<div class="t" style="left:1030.4px;top:322.6px;font-size:17.3px;color:#111"><span class="c" style="width:17.30px">参</span><span class="c" style="width:17.30px">数</span></div>
<div class="t" style="left:1065.5px;top:324.1px;font-size:15.87px;color:#111;transform:scaleX(0.985)">3</div>
<div class="t" style="left:1012.5px;top:355.6px;font-size:17.3px;color:#9c9c9c"><span class="c" style="width:17.30px">关</span></div>
<div class="t" style="left:1029.9px;top:357.1px;font-size:15.87px;color:#9c9c9c;transform:scaleX(0.983)">-</div>
<div class="t" style="left:1035.2px;top:355.6px;font-size:17.3px;color:#111"><span class="c" style="width:17.30px">开</span></div>
<div class="t" style="left:1052.6px;top:357.1px;font-size:15.87px;color:#9c9c9c;transform:scaleX(0.983)">-</div>
<div class="t" style="left:1057.9px;top:355.6px;font-size:17.3px;color:#9c9c9c"><span class="c" style="width:17.30px">保</span><span class="c" style="width:17.30px">持</span></div>
<div class="btn" style="top:382.0px">
<div class="vb"></div>
</div>
<div class="t" style="left:1030.4px;top:397.1px;font-size:17.3px;color:#111"><span class="c" style="width:17.30px">参</span><span class="c" style="width:17.30px">数</span></div>
<div class="t" style="left:1065.5px;top:398.6px;font-size:15.87px;color:#111;transform:scaleX(0.982)">4</div>
<div class="t" style="left:1012.5px;top:430.1px;font-size:17.3px;color:#9c9c9c"><span class="c" style="width:17.30px">关</span></div>
<div class="t" style="left:1029.9px;top:431.6px;font-size:15.87px;color:#9c9c9c;transform:scaleX(0.983)">-</div>
<div class="t" style="left:1035.2px;top:430.1px;font-size:17.3px;color:#111"><span class="c" style="width:17.30px">开</span></div>
<div class="t" style="left:1052.6px;top:431.6px;font-size:15.87px;color:#9c9c9c;transform:scaleX(0.983)">-</div>
<div class="t" style="left:1057.9px;top:430.1px;font-size:17.3px;color:#9c9c9c"><span class="c" style="width:17.30px">保</span><span class="c" style="width:17.30px">持</span></div>
<div class="btn sel" style="top:456.5px">
<div class="vb"></div>
</div>
<div class="t" style="left:1035.2px;top:471.6px;font-size:17.3px;color:#111"><span class="c" style="width:17.30px">分</span><span class="c" style="width:17.30px">屏</span></div>
<div class="t" style="left:1033.3px;top:506.1px;font-size:15.87px;color:#9c9c9c;transform:scaleX(1.018)">1-</div>
<div class="t" style="left:1048.0px;top:506.1px;font-size:15.87px;color:#111;transform:scaleX(0.966)">2</div>
<div class="t" style="left:1057.4px;top:506.1px;font-size:15.87px;color:#9c9c9c;transform:scaleX(1.026)">-4</div>
<div class="btn" style="top:613px;height:71px;border-bottom:none;border-radius:4px 4px 0 0"></div>
<div class="t" style="left:1035.2px;top:639.6px;font-size:17.3px;color:#111"><span class="c" style="width:17.30px">返</span><span class="c" style="width:17.30px">回</span></div>
</div>
<div class="p" style="left:1145px;top:716px;width:1135px;height:709px">
<div class="hd"></div>
<div class="t" style="left:42.5px;top:11.9px;font-size:22.0px;color:#f4f4f4"><span class="c" style="width:21.80px">曲</span><span class="c" style="width:21.80px">线</span><span class="c" style="width:21.80px">显</span><span class="c" style="width:21.80px">示</span></div>
<svg width="1136" height="50"><path d="M1053.5 10.5 L1068.5 24.5 L1065.5 24.5 L1065.5 37 L1057.5 37 L1057.5 25.5 L1049.5 25.5 L1049.5 37 L1041.5 37 L1041.5 24.5 L1038.5 24.5 Z" fill="#fff" stroke="#111" stroke-width="2" stroke-linejoin="miter"/></svg>
<div class="t" style="left:8.1px;top:45.8px;font-size:16.19px;color:#f2f2f2;transform:scaleX(1.075)">Ct  =  -2.15339μF</div>
<div class="t" style="left:199.0px;top:45.8px;font-size:16.19px;color:#f2f2f2;transform:scaleX(1.101)">Dt  =   0.22195</div>
<div class="t" style="left:389.5px;top:45.8px;font-size:16.19px;color:#f2f2f2;transform:scaleX(1.100)">Kp  =   112.016</div>
<div class="t" style="left:580.1px;top:45.8px;font-size:16.19px;color:#f2f2f2;transform:scaleX(1.090)">Qm=  -102.676</div>
<div class="t" style="left:771.2px;top:45.8px;font-size:16.19px;color:#f2f2f2;transform:scaleX(1.068)">ΔF  =   499.900kHz</div>
<div class="t" style="left:84.9px;top:62.8px;font-size:14.71px;color:#d6cc2c;transform:scaleX(1.073)">2.99541mH/</div>
<div class="t" style="left:569.7px;top:62.8px;font-size:14.71px;color:#22cc00;transform:scaleX(1.079)">11.3878kΩ/</div>
<div class="t" style="left:84.6px;top:365.1px;font-size:14.71px;color:#2f5fe0;transform:scaleX(1.064)">18.5204kΩ/</div>
<div class="t" style="left:569.1px;top:365.1px;font-size:14.71px;color:#dc0a96;transform:scaleX(1.089)">8.44244 °/</div>
<div class="t" style="left:12.0px;top:73.7px;font-size:13.12px;color:#d6cc2c;transform:scaleX(1.080)">35.3909m</div>
<div class="t" style="left:12.0px;top:101.0px;font-size:13.12px;color:#d6cc2c;transform:scaleX(1.080)">32.3955m</div>
<div class="t" style="left:11.9px;top:128.4px;font-size:13.12px;color:#d6cc2c;transform:scaleX(1.083)">29.4001m</div>
<div class="t" style="left:11.9px;top:155.7px;font-size:13.12px;color:#d6cc2c;transform:scaleX(1.083)">26.4047m</div>
<div class="t" style="left:11.9px;top:183.1px;font-size:13.12px;color:#d6cc2c;transform:scaleX(1.083)">23.4093m</div>
<div class="t" style="left:11.9px;top:210.4px;font-size:13.12px;color:#d6cc2c;transform:scaleX(1.083)">20.4139m</div>
<div class="t" style="left:11.6px;top:237.7px;font-size:13.12px;color:#d6cc2c;transform:scaleX(1.079)">17.4185m</div>
<div class="t" style="left:11.6px;top:265.1px;font-size:13.12px;color:#d6cc2c;transform:scaleX(1.079)">14.4231m</div>
<div class="t" style="left:11.6px;top:292.4px;font-size:13.12px;color:#d6cc2c;transform:scaleX(1.097)">11.4277m</div>
<div class="t" style="left:12.0px;top:319.8px;font-size:13.12px;color:#d6cc2c;transform:scaleX(1.080)">8.43224m</div>
<div class="t" style="left:12.0px;top:347.1px;font-size:13.12px;color:#d6cc2c;transform:scaleX(1.078)">5.43683m</div>
<div class="t" style="left:496.6px;top:73.7px;font-size:13.12px;color:#22cc00;transform:scaleX(1.076)">104.394k</div>
<div class="t" style="left:496.9px;top:101.0px;font-size:13.12px;color:#22cc00;transform:scaleX(1.083)">93.0066k</div>
<div class="t" style="left:497.0px;top:128.4px;font-size:13.12px;color:#22cc00;transform:scaleX(1.078)">81.6188k</div>
<div class="t" style="left:496.9px;top:155.7px;font-size:13.12px;color:#22cc00;transform:scaleX(1.097)">70.2311k</div>
<div class="t" style="left:497.0px;top:183.1px;font-size:13.12px;color:#22cc00;transform:scaleX(1.075)">58.8433k</div>
<div class="t" style="left:497.3px;top:210.4px;font-size:13.12px;color:#22cc00;transform:scaleX(1.077)">47.4556k</div>
<div class="t" style="left:497.0px;top:237.7px;font-size:13.12px;color:#22cc00;transform:scaleX(1.078)">36.0678k</div>
<div class="t" style="left:496.9px;top:265.1px;font-size:13.12px;color:#22cc00;transform:scaleX(1.080)">24.6800k</div>
<div class="t" style="left:496.6px;top:292.4px;font-size:13.12px;color:#22cc00;transform:scaleX(1.076)">13.2923k</div>
<div class="t" style="left:496.6px;top:319.8px;font-size:13.12px;color:#22cc00;transform:scaleX(1.076)">1.90454k</div>
<div class="t" style="left:496.9px;top:347.1px;font-size:13.12px;color:#22cc00;transform:scaleX(1.083)">9.48322k</div>
<div class="t" style="left:492.7px;top:347.1px;font-size:13.12px;color:#22cc00;transform:scaleX(0.983)">-</div>
<div class="t" style="left:11.6px;top:374.1px;font-size:13.12px;color:#2f5fe0;transform:scaleX(1.076)">169.778k</div>
<div class="t" style="left:11.6px;top:401.4px;font-size:13.12px;color:#2f5fe0;transform:scaleX(1.076)">151.257k</div>
<div class="t" style="left:11.6px;top:428.6px;font-size:13.12px;color:#2f5fe0;transform:scaleX(1.076)">132.737k</div>
<div class="t" style="left:11.6px;top:455.9px;font-size:13.12px;color:#2f5fe0;transform:scaleX(1.095)">114.216k</div>
<div class="t" style="left:11.9px;top:483.1px;font-size:13.12px;color:#2f5fe0;transform:scaleX(1.083)">95.6959k</div>
<div class="t" style="left:11.9px;top:510.4px;font-size:13.12px;color:#2f5fe0;transform:scaleX(1.078)">77.1755k</div>
<div class="t" style="left:12.0px;top:537.7px;font-size:13.12px;color:#2f5fe0;transform:scaleX(1.075)">58.6551k</div>
<div class="t" style="left:12.3px;top:564.9px;font-size:13.12px;color:#2f5fe0;transform:scaleX(1.077)">40.1347k</div>
<div class="t" style="left:11.9px;top:592.2px;font-size:13.12px;color:#2f5fe0;transform:scaleX(1.080)">21.6143k</div>
<div class="t" style="left:12.0px;top:619.4px;font-size:13.12px;color:#2f5fe0;transform:scaleX(1.078)">3.09393k</div>
<div class="t" style="left:11.6px;top:646.7px;font-size:13.12px;color:#2f5fe0;transform:scaleX(1.076)">15.4265k</div>
<div class="t" style="left:7.7px;top:646.7px;font-size:13.12px;color:#2f5fe0;transform:scaleX(0.983)">-</div>
<div class="t" style="left:496.6px;top:374.3px;font-size:13.12px;color:#dc0a96;transform:scaleX(1.089)">101.411</div>
<div class="t" style="left:496.9px;top:401.5px;font-size:13.12px;color:#dc0a96;transform:scaleX(1.073)">92.9684</div>
<div class="t" style="left:497.0px;top:428.8px;font-size:13.12px;color:#dc0a96;transform:scaleX(1.068)">84.5260</div>
<div class="t" style="left:496.9px;top:456.0px;font-size:13.12px;color:#dc0a96;transform:scaleX(1.063)">76.0835</div>
<div class="t" style="left:496.9px;top:483.3px;font-size:13.12px;color:#dc0a96;transform:scaleX(1.094)">67.6411</div>
<div class="t" style="left:497.0px;top:510.5px;font-size:13.12px;color:#dc0a96;transform:scaleX(1.068)">59.1986</div>
<div class="t" style="left:497.0px;top:537.7px;font-size:13.12px;color:#dc0a96;transform:scaleX(1.060)">50.7562</div>
<div class="t" style="left:497.3px;top:565.0px;font-size:13.12px;color:#dc0a96;transform:scaleX(1.070)">42.3138</div>
<div class="t" style="left:497.0px;top:592.2px;font-size:13.12px;color:#dc0a96;transform:scaleX(1.068)">33.8713</div>
<div class="t" style="left:496.9px;top:619.5px;font-size:13.12px;color:#dc0a96;transform:scaleX(1.074)">25.4289</div>
<div class="t" style="left:496.6px;top:646.7px;font-size:13.12px;color:#dc0a96;transform:scaleX(1.066)">16.9864</div>
<div class="t" style="left:88.4px;top:86.4px;font-size:14.92px;color:#d6cc2c;transform:scaleX(0.925)">Ls</div>
<div class="t" style="left:127.4px;top:86.4px;font-size:14.92px;color:#d6cc2c;transform:scaleX(1.215)">=</div>
<div class="t" style="left:148.2px;top:86.4px;font-size:14.92px;color:#d6cc2c;transform:scaleX(1.071)">32.8948</div>
<div class="t" style="left:214.3px;top:86.4px;font-size:14.92px;color:#d6cc2c;transform:scaleX(1.040)">mH</div>
<div class="t" style="left:240.9px;top:86.4px;font-size:14.92px;color:#d6cc2c;transform:scaleX(0.967)">@</div>
<div class="t" style="left:266.0px;top:86.4px;font-size:14.92px;color:#d6cc2c;transform:scaleX(1.065)">459.177</div>
<div class="t" style="left:330.8px;top:86.4px;font-size:14.92px;color:#d6cc2c;transform:scaleX(1.016)">kHz</div>
<div class="t" style="left:88.3px;top:104.1px;font-size:14.92px;color:#d6cc2c;transform:scaleX(1.019)">Max</div>
<div class="t" style="left:127.4px;top:104.1px;font-size:14.92px;color:#d6cc2c;transform:scaleX(1.215)">=</div>
<div class="t" style="left:148.2px;top:104.1px;font-size:14.92px;color:#d6cc2c;transform:scaleX(1.071)">32.8948</div>
<div class="t" style="left:214.3px;top:104.1px;font-size:14.92px;color:#d6cc2c;transform:scaleX(1.040)">mH</div>
<div class="t" style="left:240.9px;top:104.1px;font-size:14.92px;color:#d6cc2c;transform:scaleX(0.967)">@</div>
<div class="t" style="left:266.0px;top:104.1px;font-size:14.92px;color:#d6cc2c;transform:scaleX(1.065)">459.177</div>
<div class="t" style="left:330.8px;top:104.1px;font-size:14.92px;color:#d6cc2c;transform:scaleX(1.016)">kHz</div>
<div class="t" style="left:88.3px;top:121.8px;font-size:14.92px;color:#d6cc2c;transform:scaleX(1.022)">Min</div>
<div class="t" style="left:127.4px;top:121.8px;font-size:14.92px;color:#d6cc2c;transform:scaleX(1.215)">=</div>
<div class="t" style="left:148.4px;top:121.8px;font-size:14.92px;color:#d6cc2c;transform:scaleX(1.066)">7.93301</div>
<div class="t" style="left:214.3px;top:121.8px;font-size:14.92px;color:#d6cc2c;transform:scaleX(1.040)">mH</div>
<div class="t" style="left:240.9px;top:121.8px;font-size:14.92px;color:#d6cc2c;transform:scaleX(0.967)">@</div>
<div class="t" style="left:265.5px;top:121.8px;font-size:14.92px;color:#d6cc2c;transform:scaleX(1.069)">91.0282</div>
<div class="t" style="left:330.8px;top:121.8px;font-size:14.92px;color:#d6cc2c;transform:scaleX(1.016)">kHz</div>
<div class="t" style="left:574.1px;top:86.4px;font-size:14.92px;color:#22cc00;transform:scaleX(0.954)">Xs</div>
<div class="t" style="left:612.3px;top:86.4px;font-size:14.92px;color:#22cc00;transform:scaleX(1.215)">=</div>
<div class="t" style="left:633.0px;top:86.4px;font-size:14.92px;color:#22cc00;transform:scaleX(1.068)">94.9045</div>
<div class="t" style="left:703.7px;top:86.4px;font-size:14.92px;color:#22cc00;transform:scaleX(1.012)">kΩ</div>
<div class="t" style="left:725.8px;top:86.4px;font-size:14.92px;color:#22cc00;transform:scaleX(0.967)">@</div>
<div class="t" style="left:750.9px;top:86.4px;font-size:14.92px;color:#22cc00;transform:scaleX(1.065)">459.177</div>
<div class="t" style="left:815.7px;top:86.4px;font-size:14.92px;color:#22cc00;transform:scaleX(1.016)">kHz</div>
<div class="t" style="left:573.2px;top:104.1px;font-size:14.92px;color:#22cc00;transform:scaleX(1.019)">Max</div>
<div class="t" style="left:612.3px;top:104.1px;font-size:14.92px;color:#22cc00;transform:scaleX(1.215)">=</div>
<div class="t" style="left:633.0px;top:104.1px;font-size:14.92px;color:#22cc00;transform:scaleX(1.068)">94.9045</div>
<div class="t" style="left:703.7px;top:104.1px;font-size:14.92px;color:#22cc00;transform:scaleX(1.012)">kΩ</div>
<div class="t" style="left:725.8px;top:104.1px;font-size:14.92px;color:#22cc00;transform:scaleX(0.967)">@</div>
<div class="t" style="left:750.9px;top:104.1px;font-size:14.92px;color:#22cc00;transform:scaleX(1.065)">459.177</div>
<div class="t" style="left:815.7px;top:104.1px;font-size:14.92px;color:#22cc00;transform:scaleX(1.016)">kHz</div>
<div class="t" style="left:573.2px;top:121.8px;font-size:14.92px;color:#22cc00;transform:scaleX(1.022)">Min</div>
<div class="t" style="left:612.3px;top:121.8px;font-size:14.92px;color:#22cc00;transform:scaleX(1.215)">=</div>
<div class="t" style="left:632.9px;top:121.8px;font-size:14.92px;color:#22cc00;transform:scaleX(1.074)">6.57608</div>
<div class="t" style="left:711.7px;top:121.8px;font-size:14.92px;color:#22cc00;transform:scaleX(0.973)">Ω</div>
<div class="t" style="left:725.8px;top:121.8px;font-size:14.92px;color:#22cc00;transform:scaleX(0.967)">@</div>
<div class="t" style="left:750.1px;top:121.8px;font-size:14.92px;color:#22cc00;transform:scaleX(1.066)">100.000</div>
<div class="t" style="left:823.9px;top:121.8px;font-size:14.92px;color:#22cc00;transform:scaleX(0.980)">Hz</div>
<div class="t" style="left:89.0px;top:386.8px;font-size:14.92px;color:#2f5fe0;transform:scaleX(1.031)">Z</div>
<div class="t" style="left:127.4px;top:386.8px;font-size:14.92px;color:#2f5fe0;transform:scaleX(1.215)">=</div>
<div class="t" style="left:148.2px;top:386.8px;font-size:14.92px;color:#2f5fe0;transform:scaleX(1.069)">101.666</div>
<div class="t" style="left:218.8px;top:386.8px;font-size:14.92px;color:#2f5fe0;transform:scaleX(1.012)">kΩ</div>
<div class="t" style="left:240.9px;top:386.8px;font-size:14.92px;color:#2f5fe0;transform:scaleX(0.967)">@</div>
<div class="t" style="left:266.0px;top:386.8px;font-size:14.92px;color:#2f5fe0;transform:scaleX(1.065)">459.177</div>
<div class="t" style="left:330.8px;top:386.8px;font-size:14.92px;color:#2f5fe0;transform:scaleX(1.016)">kHz</div>
<div class="t" style="left:88.3px;top:404.5px;font-size:14.92px;color:#2f5fe0;transform:scaleX(1.019)">Max</div>
<div class="t" style="left:127.4px;top:404.5px;font-size:14.92px;color:#2f5fe0;transform:scaleX(1.215)">=</div>
<div class="t" style="left:148.1px;top:404.5px;font-size:14.92px;color:#2f5fe0;transform:scaleX(1.066)">154.344</div>
<div class="t" style="left:218.8px;top:404.5px;font-size:14.92px;color:#2f5fe0;transform:scaleX(1.012)">kΩ</div>
<div class="t" style="left:240.9px;top:404.5px;font-size:14.92px;color:#2f5fe0;transform:scaleX(0.967)">@</div>
<div class="t" style="left:265.7px;top:404.5px;font-size:14.92px;color:#2f5fe0;transform:scaleX(1.065)">500.000</div>
<div class="t" style="left:330.8px;top:404.5px;font-size:14.92px;color:#2f5fe0;transform:scaleX(1.016)">kHz</div>
<div class="t" style="left:88.3px;top:422.2px;font-size:14.92px;color:#2f5fe0;transform:scaleX(1.022)">Min</div>
<div class="t" style="left:127.4px;top:422.2px;font-size:14.92px;color:#2f5fe0;transform:scaleX(1.215)">=</div>
<div class="t" style="left:148.1px;top:422.2px;font-size:14.92px;color:#2f5fe0;transform:scaleX(1.071)">7.19828</div>
<div class="t" style="left:226.8px;top:422.2px;font-size:14.92px;color:#2f5fe0;transform:scaleX(0.973)">Ω</div>
<div class="t" style="left:240.9px;top:422.2px;font-size:14.92px;color:#2f5fe0;transform:scaleX(0.967)">@</div>
<div class="t" style="left:265.2px;top:422.2px;font-size:14.92px;color:#2f5fe0;transform:scaleX(1.066)">100.000</div>
<div class="t" style="left:339.0px;top:422.2px;font-size:14.92px;color:#2f5fe0;transform:scaleX(0.980)">Hz</div>
<div class="t" style="left:573.9px;top:387.0px;font-size:14.92px;color:#dc0a96;transform:scaleX(1.050)">θz°</div>
<div class="t" style="left:612.6px;top:387.0px;font-size:14.92px;color:#dc0a96;transform:scaleX(1.215)">=</div>
<div class="t" style="left:642.5px;top:387.0px;font-size:14.92px;color:#dc0a96;transform:scaleX(1.063)">68.985</div>
<div class="t" style="left:716.8px;top:387.0px;font-size:14.92px;color:#dc0a96;transform:scaleX(1.080)">°</div>
<div class="t" style="left:726.1px;top:387.0px;font-size:14.92px;color:#dc0a96;transform:scaleX(0.967)">@</div>
<div class="t" style="left:751.2px;top:387.0px;font-size:14.92px;color:#dc0a96;transform:scaleX(1.065)">459.177</div>
<div class="t" style="left:816.0px;top:387.0px;font-size:14.92px;color:#dc0a96;transform:scaleX(1.016)">kHz</div>
<div class="t" style="left:573.5px;top:404.7px;font-size:14.92px;color:#dc0a96;transform:scaleX(1.019)">Max</div>
<div class="t" style="left:612.6px;top:404.7px;font-size:14.92px;color:#dc0a96;transform:scaleX(1.215)">=</div>
<div class="t" style="left:642.4px;top:404.7px;font-size:14.92px;color:#dc0a96;transform:scaleX(1.066)">94.375</div>
<div class="t" style="left:716.8px;top:404.7px;font-size:14.92px;color:#dc0a96;transform:scaleX(1.080)">°</div>
<div class="t" style="left:726.1px;top:404.7px;font-size:14.92px;color:#dc0a96;transform:scaleX(0.967)">@</div>
<div class="t" style="left:750.7px;top:404.7px;font-size:14.92px;color:#dc0a96;transform:scaleX(1.071)">275.450</div>
<div class="t" style="left:816.0px;top:404.7px;font-size:14.92px;color:#dc0a96;transform:scaleX(1.016)">kHz</div>
<div class="t" style="left:573.5px;top:422.4px;font-size:14.92px;color:#dc0a96;transform:scaleX(1.022)">Min</div>
<div class="t" style="left:612.6px;top:422.4px;font-size:14.92px;color:#dc0a96;transform:scaleX(1.215)">=</div>
<div class="t" style="left:642.7px;top:422.4px;font-size:14.92px;color:#dc0a96;transform:scaleX(1.063)">24.022</div>
<div class="t" style="left:716.8px;top:422.4px;font-size:14.92px;color:#dc0a96;transform:scaleX(1.080)">°</div>
<div class="t" style="left:726.1px;top:422.4px;font-size:14.92px;color:#dc0a96;transform:scaleX(0.967)">@</div>
<div class="t" style="left:750.9px;top:422.4px;font-size:14.92px;color:#dc0a96;transform:scaleX(1.065)">500.000</div>
<div class="t" style="left:816.0px;top:422.4px;font-size:14.92px;color:#dc0a96;transform:scaleX(1.016)">kHz</div>
<div class="t" style="left:8.5px;top:667.0px;font-size:16.0px;color:#f2f2f2"><span class="c" style="width:15.80px">起</span><span class="c" style="width:15.80px">点</span></div>
<div class="t" style="left:42.1px;top:665.9px;font-size:16.40px;color:#f2f2f2;transform:scaleX(0.945)">:</div>
<div class="t" style="left:57.0px;top:665.8px;font-size:16.50px;color:#f2f2f2;transform:scaleX(1.038)">100 Hz</div>
<div class="t" style="left:272.5px;top:667.0px;font-size:16.0px;color:#f2f2f2"><span class="c" style="width:15.80px">电</span><span class="c" style="width:15.80px">平</span></div>
<div class="t" style="left:306.1px;top:665.9px;font-size:16.40px;color:#f2f2f2;transform:scaleX(0.945)">:</div>
<div class="t" style="left:320.7px;top:665.8px;font-size:16.50px;color:#f2f2f2;transform:scaleX(1.012)">1 V</div>
<div class="t" style="left:414.5px;top:667.0px;font-size:16.0px;color:#f2f2f2"><span class="c" style="width:15.80px">偏</span><span class="c" style="width:15.80px">置</span></div>
<div class="t" style="left:448.1px;top:665.9px;font-size:16.40px;color:#f2f2f2;transform:scaleX(0.945)">:</div>
<div class="t" style="left:462.2px;top:665.8px;font-size:16.50px;color:#f2f2f2;transform:scaleX(1.023)">0 V</div>
<div class="t" style="left:556.0px;top:665.8px;font-size:16.50px;color:#f2f2f2;transform:scaleX(1.052)">ΔT : 0.703 s</div>
<div class="t" style="left:854.7px;top:667.0px;font-size:16.0px;color:#f2f2f2"><span class="c" style="width:15.80px">终</span><span class="c" style="width:15.80px">点</span></div>
<div class="t" style="left:888.3px;top:665.9px;font-size:16.40px;color:#f2f2f2;transform:scaleX(0.945)">:</div>
<div class="t" style="left:903.7px;top:665.8px;font-size:16.50px;color:#f2f2f2;transform:scaleX(1.043)">500kHz</div>
<svg width="970" height="683"><path d="M80.6 109.1H468.0M80.6 136.5H468.0M80.6 163.8H468.0M80.6 191.2H468.0M80.6 218.5H468.0M80.6 245.8H468.0M80.6 273.2H468.0M80.6 300.5H468.0M80.6 327.9H468.0" stroke="#a0a0a0" stroke-width="1.1" stroke-dasharray="3.3 2.3" fill="none"/><path d="M112.1 81.8V355.2M143.7 81.8V355.2M162.1 81.8V355.2M175.2 81.8V355.2M185.3 81.8V355.2M216.9 81.8V355.2M248.4 81.8V355.2M266.8 81.8V355.2M279.9 81.8V355.2M290.1 81.8V355.2M321.6 81.8V355.2M353.1 81.8V355.2M371.6 81.8V355.2M384.6 81.8V355.2M394.8 81.8V355.2M457.9 81.8V355.2" stroke="#b8b8b8" stroke-width="1.1" stroke-dasharray="3.2 2.2" fill="none"/><rect x="80.6" y="81.8" width="387.4" height="273.4" stroke="#9a9a9a" stroke-width="1.3" fill="none"/><path d="M565.5 109.1H952.2M565.5 136.5H952.2M565.5 163.8H952.2M565.5 191.2H952.2M565.5 218.5H952.2M565.5 245.8H952.2M565.5 273.2H952.2M565.5 300.5H952.2M565.5 327.9H952.2" stroke="#a0a0a0" stroke-width="1.1" stroke-dasharray="3.3 2.3" fill="none"/><path d="M597.0 81.8V355.2M628.4 81.8V355.2M646.8 81.8V355.2M659.9 81.8V355.2M670.0 81.8V355.2M701.5 81.8V355.2M733.0 81.8V355.2M751.4 81.8V355.2M764.5 81.8V355.2M774.6 81.8V355.2M806.1 81.8V355.2M837.5 81.8V355.2M855.9 81.8V355.2M869.0 81.8V355.2M879.1 81.8V355.2M942.1 81.8V355.2" stroke="#b8b8b8" stroke-width="1.1" stroke-dasharray="3.2 2.2" fill="none"/><rect x="565.5" y="81.8" width="386.7" height="273.4" stroke="#9a9a9a" stroke-width="1.3" fill="none"/><path d="M80.6 409.5H468.0M80.6 436.7H468.0M80.6 464.0H468.0M80.6 491.2H468.0M80.6 518.5H468.0M80.6 545.8H468.0M80.6 573.0H468.0M80.6 600.3H468.0M80.6 627.5H468.0" stroke="#a0a0a0" stroke-width="1.1" stroke-dasharray="3.3 2.3" fill="none"/><path d="M112.1 382.2V654.8M143.7 382.2V654.8M162.1 382.2V654.8M175.2 382.2V654.8M185.3 382.2V654.8M216.9 382.2V654.8M248.4 382.2V654.8M266.8 382.2V654.8M279.9 382.2V654.8M290.1 382.2V654.8M321.6 382.2V654.8M353.1 382.2V654.8M371.6 382.2V654.8M384.6 382.2V654.8M394.8 382.2V654.8M457.9 382.2V654.8" stroke="#b8b8b8" stroke-width="1.1" stroke-dasharray="3.2 2.2" fill="none"/><rect x="80.6" y="382.2" width="387.4" height="272.6" stroke="#9a9a9a" stroke-width="1.3" fill="none"/><path d="M565.8 409.6H952.2M565.8 436.9H952.2M565.8 464.1H952.2M565.8 491.4H952.2M565.8 518.6H952.2M565.8 545.8H952.2M565.8 573.1H952.2M565.8 600.3H952.2M565.8 627.6H952.2" stroke="#a0a0a0" stroke-width="1.1" stroke-dasharray="3.3 2.3" fill="none"/><path d="M597.2 382.4V654.8M628.7 382.4V654.8M647.1 382.4V654.8M660.1 382.4V654.8M670.3 382.4V654.8M701.7 382.4V654.8M733.2 382.4V654.8M751.5 382.4V654.8M764.6 382.4V654.8M774.7 382.4V654.8M806.2 382.4V654.8M837.6 382.4V654.8M856.0 382.4V654.8M869.1 382.4V654.8M879.2 382.4V654.8M942.1 382.4V654.8" stroke="#b8b8b8" stroke-width="1.1" stroke-dasharray="3.2 2.2" fill="none"/><rect x="565.8" y="382.4" width="386.4" height="272.4" stroke="#9a9a9a" stroke-width="1.3" fill="none"/><path d="M462.3 82.0V355.0" stroke="#e01010" stroke-width="1.3" stroke-dasharray="3 2" fill="none"/><path d="M461.3 358.5L464.5 364.5L458.1 364.5Z" fill="#f00"/><path d="M947.7 82.0V355.0" stroke="#e01010" stroke-width="1.3" stroke-dasharray="3 2" fill="none"/><path d="M946.7 358.5L949.9 364.5L943.5 364.5Z" fill="#f00"/><path d="M462.3 382.0V655.0" stroke="#e01010" stroke-width="1.3" stroke-dasharray="3 2" fill="none"/><path d="M461.3 658.5L464.5 664.5L458.1 664.5Z" fill="#f00"/><path d="M947.9 382.0V655.0" stroke="#e01010" stroke-width="1.3" stroke-dasharray="3 2" fill="none"/><path d="M946.9 658.5L950.1 664.5L943.7 664.5Z" fill="#f00"/><path d="M80.6 308.6C81.7 308.6 86.6 307.7 88.2 308.6C89.8 309.5 90.9 314.9 92.0 314.9C93.1 314.9 89.0 309.7 95.7 308.6C102.4 307.5 128.9 308.0 138.6 307.3C148.3 306.6 156.6 305.3 163.8 303.5C171.0 301.7 182.9 296.6 189.0 294.7C195.1 292.8 202.6 291.0 206.6 290.5C210.6 290.0 212.0 289.9 216.7 291.0C221.4 292.1 230.8 295.3 239.4 298.5C248.0 301.7 264.5 309.8 277.1 313.6C289.7 317.4 314.5 322.5 327.5 325.0C340.5 327.5 357.1 330.5 367.9 331.3C378.7 332.1 395.2 331.5 403.1 330.8C411.0 330.1 417.9 329.0 423.3 326.2C428.7 323.4 436.9 317.9 440.9 311.1C444.9 304.3 448.8 289.2 451.0 278.4C453.2 267.6 454.6 251.7 456.0 235.5C457.4 219.3 460.0 180.5 461.1 165.0C462.2 149.5 463.2 134.5 463.6 127.2C464.0 119.9 463.7 113.7 464.0 114.0C464.3 114.3 465.1 119.0 465.5 129.0C465.9 139.0 466.4 176.1 466.5 184.0" stroke="#e0d820" stroke-width="1.3" fill="none" stroke-linejoin="round"/><path d="M565.5 331.7C599.7 331.5 763.2 331.0 804.8 330.0C846.4 329.0 845.1 326.6 856.5 324.7C867.9 322.8 877.3 319.3 884.7 316.4C892.1 313.5 902.3 308.7 908.0 304.7C913.7 300.7 920.6 293.9 924.7 288.2C928.8 282.5 933.9 274.1 936.4 264.7C938.9 255.3 941.0 236.2 942.3 222.4C943.6 208.6 944.9 183.4 945.8 168.3C946.7 153.2 947.9 122.9 948.5 116.6C949.1 110.3 949.6 118.7 950.0 124.0C950.4 129.3 950.9 149.7 951.0 154.0" stroke="#30e010" stroke-width="1.3" fill="none" stroke-linejoin="round"/><path d="M80.6 631.1C115.2 630.9 280.0 630.6 322.5 629.9C365.0 629.2 364.6 627.7 377.9 626.1C391.2 624.5 407.4 621.0 415.7 618.5C424.0 616.0 431.2 612.8 435.9 608.5C440.6 604.2 445.6 595.1 448.5 588.3C451.4 581.5 454.4 570.7 456.0 560.6C457.6 550.5 458.9 529.3 459.8 517.8C460.7 506.3 461.6 491.9 462.3 480.0C463.0 468.1 464.4 444.0 464.9 434.6C465.4 425.2 465.8 416.9 466.0 414.0" stroke="#3068f0" stroke-width="1.3" fill="none" stroke-linejoin="round"/><path d="M566.0 496.0C567.6 495.1 574.9 491.9 577.2 489.8C579.5 487.7 579.4 483.5 582.2 481.0C585.0 478.5 589.6 474.8 597.1 472.3C604.6 469.8 625.6 465.2 634.5 463.6C643.4 462.0 654.4 461.6 659.4 461.1C664.4 460.6 667.3 460.6 669.4 459.9C671.5 459.2 671.5 456.6 674.3 456.1C677.1 455.6 680.8 458.2 689.3 456.6C697.8 455.0 722.4 447.8 734.1 444.9C745.8 442.0 757.3 438.9 771.5 436.2C785.7 433.5 817.8 428.7 833.8 426.2C849.8 423.7 871.5 421.5 883.6 418.8C895.7 416.1 911.0 409.2 918.5 407.6C926.0 406.0 932.3 405.6 935.9 407.6C939.5 409.6 941.8 412.9 943.4 421.3C945.0 429.7 946.2 450.8 947.1 466.1C948.0 481.4 949.1 512.0 949.6 528.4C950.1 544.8 950.7 573.2 950.9 580.7" stroke="#e81ca4" stroke-width="1.3" fill="none" stroke-linejoin="round"/><rect x="454.8" y="104.0" width="16.3" height="15.1" fill="#c8c030"/><text x="462.9" y="116.6" font-size="12.5" text-anchor="middle" fill="#111" font-family="Liberation Sans">M</text><rect x="380.4" y="317.4" width="17.7" height="13.9" fill="#c8c030"/><text x="389.2" y="328.8" font-size="12.5" text-anchor="middle" fill="#111" font-family="Liberation Sans">m</text><rect x="940.0" y="104.8" width="16.4" height="13.0" fill="#5ad818"/><text x="948.2" y="115.3" font-size="12.5" text-anchor="middle" fill="#111" font-family="Liberation Sans">M</text><rect x="555.5" y="317.4" width="19.5" height="13.9" fill="#22c010"/><text x="565.2" y="328.8" font-size="12.5" text-anchor="middle" fill="#111" font-family="Liberation Sans">m</text><rect x="458.6" y="403.1" width="17.6" height="15.1" fill="#2f64d0"/><text x="467.4" y="415.7" font-size="12.5" text-anchor="middle" fill="#111" font-family="Liberation Sans">M</text><rect x="71.8" y="617.3" width="16.4" height="13.8" fill="#2f64d0"/><text x="80.0" y="628.6" font-size="12.5" text-anchor="middle" fill="#111" font-family="Liberation Sans">m</text><rect x="916.0" y="405.0" width="17.0" height="12.5" fill="#dc0a96"/><text x="924.5" y="415.0" font-size="12.5" text-anchor="middle" fill="#111" font-family="Liberation Sans">M</text><rect x="943.4" y="618.0" width="17.4" height="11.3" fill="#dc0a96"/><text x="952.1" y="626.8" font-size="12.5" text-anchor="middle" fill="#111" font-family="Liberation Sans">m</text><path d="M483.7 204.0L473.2 214.5" stroke="#e0d820" stroke-width="2.2" stroke-linecap="round"/><path d="M468.6 219.1L471.6 212.9L474.8 216.1Z" fill="#e0d820"/><path d="M969.4 163.6L958.5 175.2" stroke="#30e010" stroke-width="2.2" stroke-linecap="round"/><path d="M954.1 180.0L956.9 173.7L960.2 176.8Z" fill="#30e010"/><path d="M485.0 386.8L472.5 396.6" stroke="#3068f0" stroke-width="2.2" stroke-linecap="round"/><path d="M467.4 400.6L471.1 394.8L473.9 398.4Z" fill="#3068f0"/><path d="M969.6 614.3L960.1 621.9" stroke="#e81ca4" stroke-width="2.2" stroke-linecap="round"/><path d="M955.0 626.0L958.6 620.1L961.5 623.7Z" fill="#e81ca4"/><path d="M450.2 87.9A9.6 9.6 0 1 1 444.1 95.2" stroke="#ece422" stroke-width="2.8" fill="none"/><path d="M439.3 93.9L446.4 87.6L448.2 97.5Z" fill="#ece422"/></svg>
<div class="st"></div>
<div style="position:absolute;left:937px;top:686px;width:32px;height:23px;background:#fff;border-top:2px solid #8a8a8a;border-left:2px solid #8a8a8a;border-bottom:1px solid #dcdcdc;border-right:1px solid #dcdcdc"></div>
<svg width="1136" height="710"><g transform="translate(0,-2.5)" stroke="#222" fill="#222" stroke-width="1.6"><path d="M943 698.5H962" fill="none"/><path d="M962 695.5L966 698.5L962 701.5Z" stroke="none"/><path d="M949 698.5L953 693.5H957" fill="none"/><path d="M951 698.5L955 703.5H958" fill="none"/><circle cx="943.5" cy="698.5" r="2" stroke="none"/><rect x="957" y="692" width="3" height="3" stroke="none"/><circle cx="959" cy="703.5" r="1.7" stroke="none"/></g></svg>
<div class="t" style="left:983.3px;top:688.9px;font-size:15.87px;color:#1c1c1c;transform:scaleX(0.926)">2022/04/06 10:13:33</div>
<div class="sb"></div>
<div class="tb"></div>
<div class="t" style="left:1035.0px;top:54.8px;font-size:17.5px;color:#f4f4f4"><span class="c" style="width:17.50px">曲</span><span class="c" style="width:17.50px">线</span></div>
<div class="btn" style="top:84.0px">
<div class="vb"></div>
</div>
<div class="t" style="left:1017.9px;top:99.1px;font-size:17.3px;color:#111"><span class="c" style="width:17.30px">扫</span><span class="c" style="width:17.30px">描</span><span class="c" style="width:17.30px">点</span><span class="c" style="width:17.30px">数</span></div>
<div class="t" style="left:1038.7px;top:133.6px;font-size:15.87px;color:#111;transform:scaleX(1.043)">101</div>
<svg width="1136" height="710"><path d="M1115.3 98.6A9.2 9.2 0 1 1 1109.5 105.6" stroke="#6b6d69" stroke-width="2.6" fill="none"/><path d="M1104.3 104.2L1111.4 97.9L1113.2 107.8Z" fill="#6b6d69"/></svg>
<div class="btn" style="top:158.5px">
<div class="vb"></div>
</div>
<div class="t" style="left:1030.4px;top:173.6px;font-size:17.3px;color:#111"><span class="c" style="width:17.30px">参</span><span class="c" style="width:17.30px">数</span></div>
<div class="t" style="left:1065.6px;top:175.1px;font-size:15.87px;color:#111;transform:scaleX(0.945)">1</div>
<div class="t" style="left:1012.5px;top:206.6px;font-size:17.3px;color:#9c9c9c"><span class="c" style="width:17.30px">关</span></div>
<div class="t" style="left:1029.9px;top:208.1px;font-size:15.87px;color:#9c9c9c;transform:scaleX(0.983)">-</div>
<div class="t" style="left:1035.2px;top:206.6px;font-size:17.3px;color:#111"><span class="c" style="width:17.30px">开</span></div>
<div class="t" style="left:1052.6px;top:208.1px;font-size:15.87px;color:#9c9c9c;transform:scaleX(0.983)">-</div>
<div class="t" style="left:1057.9px;top:206.6px;font-size:17.3px;color:#9c9c9c"><span class="c" style="width:17.30px">保</span><span class="c" style="width:17.30px">持</span></div>
<div class="btn" style="top:233.0px">
<div class="vb"></div>
</div>
<div class="t" style="left:1030.4px;top:248.1px;font-size:17.3px;color:#111"><span class="c" style="width:17.30px">参</span><span class="c" style="width:17.30px">数</span></div>
<div class="t" style="left:1065.3px;top:249.6px;font-size:15.87px;color:#111;transform:scaleX(0.966)">2</div>
<div class="t" style="left:1012.5px;top:281.1px;font-size:17.3px;color:#9c9c9c"><span class="c" style="width:17.30px">关</span></div>
<div class="t" style="left:1029.9px;top:282.6px;font-size:15.87px;color:#9c9c9c;transform:scaleX(0.983)">-</div>
<div class="t" style="left:1035.2px;top:281.1px;font-size:17.3px;color:#111"><span class="c" style="width:17.30px">开</span></div>
<div class="t" style="left:1052.6px;top:282.6px;font-size:15.87px;color:#9c9c9c;transform:scaleX(0.983)">-</div>
<div class="t" style="left:1057.9px;top:281.1px;font-size:17.3px;color:#9c9c9c"><span class="c" style="width:17.30px">保</span><span class="c" style="width:17.30px">持</span></div>
<div class="btn" style="top:307.5px">
<div class="vb"></div>
</div>
<div class="t" style="left:1030.4px;top:322.6px;font-size:17.3px;color:#111"><span class="c" style="width:17.30px">参</span><span class="c" style="width:17.30px">数</span></div>
<div class="t" style="left:1065.5px;top:324.1px;font-size:15.87px;color:#111;transform:scaleX(0.985)">3</div>
<div class="t" style="left:1012.5px;top:355.6px;font-size:17.3px;color:#9c9c9c"><span class="c" style="width:17.30px">关</span></div>
<div class="t" style="left:1029.9px;top:357.1px;font-size:15.87px;color:#9c9c9c;transform:scaleX(0.983)">-</div>
<div class="t" style="left:1035.2px;top:355.6px;font-size:17.3px;color:#111"><span class="c" style="width:17.30px">开</span></div>
<div class="t" style="left:1052.6px;top:357.1px;font-size:15.87px;color:#9c9c9c;transform:scaleX(0.983)">-</div>
<div class="t" style="left:1057.9px;top:355.6px;font-size:17.3px;color:#9c9c9c"><span class="c" style="width:17.30px">保</span><span class="c" style="width:17.30px">持</span></div>
<div class="btn" style="top:382.0px">
<div class="vb"></div>
</div>
<div class="t" style="left:1030.4px;top:397.1px;font-size:17.3px;color:#111"><span class="c" style="width:17.30px">参</span><span class="c" style="width:17.30px">数</span></div>
<div class="t" style="left:1065.5px;top:398.6px;font-size:15.87px;color:#111;transform:scaleX(0.982)">4</div>
<div class="t" style="left:1012.5px;top:430.1px;font-size:17.3px;color:#9c9c9c"><span class="c" style="width:17.30px">关</span></div>
<div class="t" style="left:1029.9px;top:431.6px;font-size:15.87px;color:#9c9c9c;transform:scaleX(0.983)">-</div>
<div class="t" style="left:1035.2px;top:430.1px;font-size:17.3px;color:#111"><span class="c" style="width:17.30px">开</span></div>
<div class="t" style="left:1052.6px;top:431.6px;font-size:15.87px;color:#9c9c9c;transform:scaleX(0.983)">-</div>
<div class="t" style="left:1057.9px;top:430.1px;font-size:17.3px;color:#9c9c9c"><span class="c" style="width:17.30px">保</span><span class="c" style="width:17.30px">持</span></div>
<div class="btn sel" style="top:456.5px">
<div class="vb"></div>
</div>
<div class="t" style="left:1035.2px;top:471.6px;font-size:17.3px;color:#111"><span class="c" style="width:17.30px">分</span><span class="c" style="width:17.30px">屏</span></div>
<div class="t" style="left:1033.3px;top:506.1px;font-size:15.87px;color:#9c9c9c;transform:scaleX(1.036)">1-2-</div>
<div class="t" style="left:1063.1px;top:506.1px;font-size:15.87px;color:#111;transform:scaleX(0.982)">4</div>
<div class="btn" style="top:613px;height:71px;border-bottom:none;border-radius:4px 4px 0 0"></div>
<div class="t" style="left:1035.2px;top:639.6px;font-size:17.3px;color:#111"><span class="c" style="width:17.30px">返</span><span class="c" style="width:17.30px">回</span></div>
</div>
</body></html>
